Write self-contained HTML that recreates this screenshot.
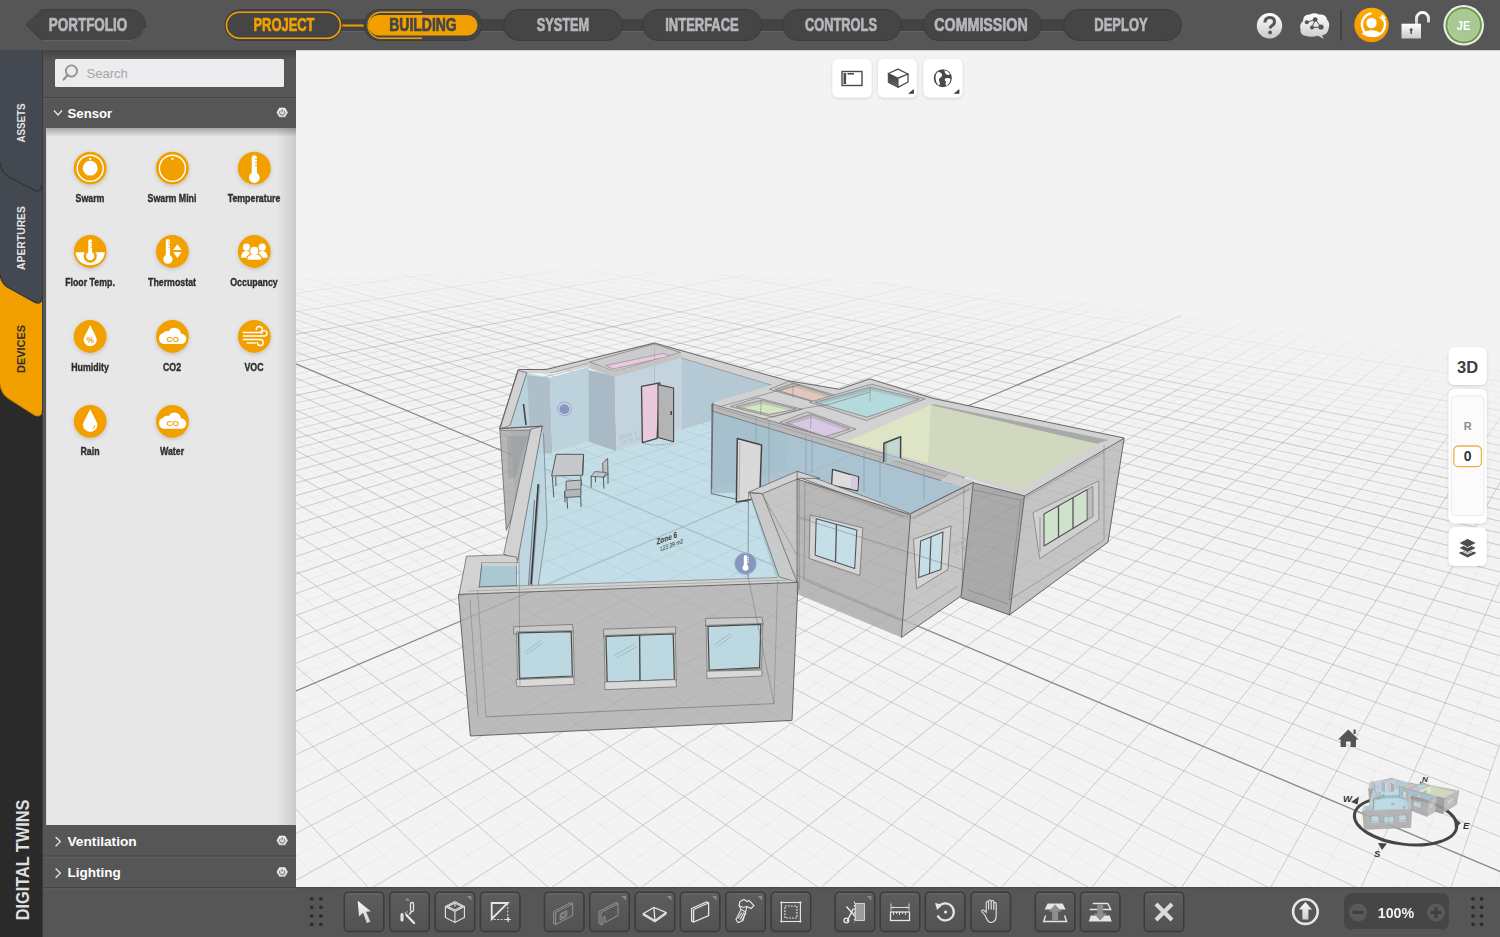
<!DOCTYPE html>
<html><head><meta charset="utf-8"><style>
*{margin:0;padding:0;box-sizing:border-box}
html,body{width:1500px;height:937px;overflow:hidden;background:#f3f3f3;font-family:"Liberation Sans",sans-serif}
#vp{position:absolute;left:0;top:0;width:1500px;height:937px;overflow:hidden}
#top{position:absolute;left:0;top:0;width:1500px;height:50px;background:#555655}
#left{position:absolute;left:0;top:50px;width:296px;height:887px}
#bottom{position:absolute;left:296px;top:887px;width:1204px;height:50px;background:#555655}
.pt{position:absolute;top:10px;height:31px;line-height:31px;-webkit-text-stroke:0.7px currentColor;text-align:center;font-weight:bold;font-size:18px;color:#b8b7bc;transform:scaleX(0.76);white-space:nowrap}
.vt{position:absolute;font-weight:bold;font-size:11.5px;white-space:nowrap;line-height:14px}
.lab{position:absolute;-webkit-text-stroke:0.35px currentColor;width:80px;text-align:center;font-weight:bold;font-size:10px;line-height:12px;color:#2e2e2e;transform:scaleX(0.88);white-space:nowrap}

</style></head><body>
<div id="vp"><svg width="1500" height="937" viewBox="0 0 1500 937" style="position:absolute;left:0;top:0">
<rect x="0" y="0" width="1500" height="937" fill="#f3f3f3"/>
<path d="M1319 352L1341 338M1269 364L1318 334M1207 382L1296 331M1145 397L1274 328M1089 408L1253 325M1016 426L1232 322M949 439L1212 319M877 453L1193 316M800 468L1174 313M715 484L1155 310M623 502L1137 308M523 522L1119 305M444 532L1094 305M327 555L1045 313M274 555L993 322M293 532L946 328M278 522L886 338M296 502L834 345M281 493L778 352M267 484L719 360M284 468L657 369M271 460L590 378M287 446L520 387M274 439L465 392M289 426L387 403M277 420L327 408M-3044 944L-2834 906M-3140 944L-2926 906M-3475 986L-3018 906M-3576 986L-3110 906M606 273L617 271M-3677 986L-3202 906M562 277L596 271M528 279L576 271M430 287L534 271M393 289L513 271M340 294L492 271M300 296L471 271M286 291L416 273M278 289L382 275M287 285L360 275M280 283L325 277M347 426L276 392M428 446L278 378M503 460L281 364M583 476L283 352M670 493L276 338M740 502L278 328M841 522L280 319M920 532L282 310M1038 555L324 316M1128 567L368 322M1223 580L425 331M1371 608L475 338M1481 623L527 345M1541 623L597 356M1494 593L657 364M1501 580L705 369M1506 567L771 378M1512 555L842 387M1517 543L918 397M1522 532L975 403M1527 522L1059 414M1531 512L1123 420M1536 502L1188 426M1540 493L1287 439M1504 476L1359 446M1508 468L1434 453M845 281L832 279M930 287L916 285M982 291L967 289" stroke="#9c9c9c" stroke-opacity="0.05" stroke-width="1" fill="none"/>
<path d="M35383 10663L14215 4010M34199 10663L9123 2494M33016 10663L7395 2001M31832 10663L5899 1550M30648 10663L5192 1352M29465 10663L4654 1201M28281 10663L4103 1031M27098 10663L3789 944M25914 10663L3606 906M24730 10663L3514 906M23547 10663L3422 906M22363 10663L3330 906M21179 10663L3238 906M19996 10663L3146 906M18812 10663L3054 906M17629 10663L2962 906M16445 10663L2870 906M15261 10663L2778 906M14078 10663L2686 906M12894 10663L2594 906M11711 10663L2502 906M10527 10663L2410 906M9343 10663L2318 906M8160 10663L2226 906M6976 10663L2134 906M5792 10663L2042 906M4609 10663L1950 906M3425 10663L1858 906M2242 10663L1766 906M1058 10663L1674 906M-126 10663L1582 906M-1309 10663L1518 811M-2493 10663L1517 608M-3676 10663L1522 484M-4860 10663L1521 414M-6044 10663L1517 369M-7227 10663L1489 364M-8411 10663L1465 356M-9595 10663L1439 352M-10778 10663L1413 349M-11962 10663L1388 345M-13145 10663L1364 341M-14329 10663L1319 352M-15513 10663L1269 364M-16696 10663L1207 382M-17880 10663L202 906M266 872L1145 397M-19063 10663L110 906M298 811L1089 408M-20247 10663L18 906M273 783L1016 426M-21431 10663L-74 906M301 735L949 439M-22614 10663L-166 906M279 713L877 453M-23798 10663L-258 906M258 693L800 468M-24982 10663L-350 906M283 655L715 484M-26165 10663L-442 906M264 639L623 502M-27349 10663L-534 906M287 608L523 522M-28532 10663L-626 906M269 593L444 532M-29716 10663L-718 906M291 567L327 555M-30900 10663L-810 906M-32083 10663L-902 906M-33267 10663L-994 906M-34450 10663L-1086 906M-35634 10663L-1178 906M-36818 10663L-1270 906M-38001 10663L-1362 906M-39185 10663L-1454 906M-40369 10663L-1546 906M-41552 10663L-1638 906M-42736 10663L-1730 906M-43919 10663L-1822 906M-45103 10663L-1914 906M-46287 10663L-2006 906M-47470 10663L-2098 906M-30466 6844L-2190 906M769 283L798 277M-22483 5051L-2282 906M726 287L787 275M-14455 3329L-2374 906M680 291L765 275M-12374 2850L-2466 906M-9397 2219L-2558 906M596 299L733 273M-8473 2001L-2650 906M545 304L712 273M-6918 1675L-2742 906M492 309L691 273M-5815 1444L-3044 944M451 312L680 271M-4991 1271L-3140 944M-4716 1201L-3475 986M332 323L638 271M-4141 1082L-3576 986M287 326L606 273M279 323L562 277M289 317L528 279M273 312L430 287M282 306L393 289M275 304L340 294M284 299L300 296M-46878 10663L-17627 4010M-45695 10663L-10694 2494M-44511 10663L-8366 2001M-43328 10663L-6323 1550M-42144 10663L-5375 1352M-40960 10663L-4653 1201M-39777 10663L-3897 1031M-38593 10663L-3477 944M-37410 10663L-3248 906M-36226 10663L-3156 906M-35042 10663L-3064 906M-33859 10663L-2972 906M-32675 10663L-2880 906M-31491 10663L-2788 906M-30308 10663L-2696 906M-29124 10663L-2604 906M-27941 10663L-2512 906M-26757 10663L-2420 906M-25573 10663L-2328 906M-24390 10663L-2236 906M-23206 10663L-2144 906M-22023 10663L-2052 906M-20839 10663L-1960 906M-19655 10663L-1868 906M-18472 10663L-1776 906M-17288 10663L-1684 906M-16104 10663L-1592 906M-14921 10663L-1500 906M-13737 10663L-1408 906M-12554 10663L-1316 906M-11370 10663L-1224 906M-10186 10663L-1132 906M-9003 10663L-1040 906M-7819 10663L-948 906M-6636 10663L-856 906M-5452 10663L-764 906M-4268 10663L-672 906M-3085 10663L-580 906M-1901 10663L-488 906M-717 10663L-396 906M466 10663L-304 906M1650 10663L-212 906M2833 10663L-120 906M4017 10663L-28 906M5201 10663L64 906M6384 10663L156 906M7568 10663L248 906M8751 10663L283 840M9935 10663L288 758M11119 10663L271 673M12302 10663L276 623M13486 10663L280 580M14670 10663L284 543M15853 10663L287 512M17037 10663L276 476M18220 10663L279 453M19404 10663L282 432M20588 10663L284 414M21771 10663L347 426M22955 10663L428 446M24138 10663L503 460M25322 10663L1628 906M1544 872L583 476M26506 10663L1720 906M1551 840L670 493M27689 10663L1812 906M1486 783L740 502M28873 10663L1904 906M1495 758L841 522M30057 10663L1996 906M1503 735L920 532M31240 10663L2088 906M1510 713L1038 555M32424 10663L2180 906M1517 693L1128 567M33607 10663L2272 906M1524 673L1223 580M34791 10663L2364 906M1530 655L1371 608M35975 10663L2456 906M1536 639L1481 623M23611 6844L2548 906M17806 5051L2640 906M11869 3329L2732 906M10371 2850L2824 906M8160 2219L2916 906M7502 2001L3008 906M6342 1675L3100 906M5520 1444L3192 906M4906 1271L3284 906M4716 1201L3376 906M4286 1082L3468 906M549 279L513 271M3939 986L3560 906M591 283L534 271M635 287L555 271M680 291L576 271M777 301L617 271M815 304L638 271M869 309L659 271M925 314L691 273M1028 323L744 275M1074 326L765 275M1140 333L798 277M1188 336L845 281M1313 347L930 287M1366 350L982 291M1422 354L1036 296" stroke="#9c9c9c" stroke-opacity="0.10" stroke-width="1" fill="none"/>
<path d="M856 294L902 283M812 299L889 281M766 304L867 281M718 309L854 279M614 320L820 277M558 326L769 283M516 330L726 287M455 336L680 291M343 347L596 299M272 354L545 304M284 347L492 309M275 343L451 312M277 333L332 323M375 279L360 275M413 283L382 275M504 294L416 273M548 299L437 273M594 304L450 271M643 309L471 271M746 320L549 279M802 326L591 283M861 333L635 287M906 336L680 291M1019 347L777 301M1089 354L815 304M1141 358L869 309M1218 367L925 314M1333 375L1028 323M1393 380L1074 326M1455 385L1140 333M1519 390L1188 336M1525 380L1313 347M1528 375L1366 350M1503 367L1422 354" stroke="#9c9c9c" stroke-opacity="0.15" stroke-width="1" fill="none"/>
<path d="M956 299L990 289M904 306L967 289M859 312L953 287M811 317L938 285M694 333L856 294M652 336L812 299M594 343L766 304M532 350L718 309M416 362L614 320M344 371L558 326M290 375L516 330M280 371L455 336M282 358L343 347M317 287L288 279M413 301L325 277M457 306L339 275M513 314L375 279M561 320L413 283M667 333L504 294M723 340L548 299M783 347L594 304M830 350L643 309M945 362L746 320M1018 371L802 326M1072 375L861 333M1152 385L906 336M1272 395L1019 347M1364 405L1089 354M1431 411L1141 358M1500 417L1218 367M1508 405L1333 375M1512 400L1393 380M1515 395L1455 385" stroke="#9c9c9c" stroke-opacity="0.20" stroke-width="1" fill="none"/>
<path d="M1036 304L1060 296M986 312L1036 296M941 317L1020 294M834 333L956 299M781 340L904 306M725 347L859 312M666 354L811 317M536 371L694 333M485 375L652 336M412 385L594 343M356 390L532 350M288 390L416 362M277 385L344 371M284 299L277 296M332 306L278 289M375 312L280 283M429 320L317 287M527 333L413 301M580 340L457 306M651 350L513 314M696 354L561 320M825 371L667 333M896 380L723 340M950 385L783 347M1029 395L830 350M1148 405L945 362M1240 417L1018 371M1307 423L1072 375M1376 429L1152 385M1523 442L1272 395M1527 436L1364 405M1530 429L1431 411M1534 423L1500 417" stroke="#9c9c9c" stroke-opacity="0.25" stroke-width="1" fill="none"/>
<path d="M1095 309L1110 304M992 326L1076 299M945 333L1036 304M883 343L986 312M830 350L941 317M712 367L834 333M648 375L781 340M580 385L725 347M527 390L666 354M370 411L536 371M309 417L485 375M272 417L412 385M286 405L356 390M369 326L284 299M427 336L332 306M478 343L375 312M532 350L429 320M649 367L527 333M713 375L580 340M782 385L651 350M855 395L696 354M992 411L825 371M1053 417L896 380M1144 429L950 385M1212 436L1029 395M1356 449L1148 405M1432 457L1240 417M1511 464L1307 423M1515 457L1376 429" stroke="#9c9c9c" stroke-opacity="0.30" stroke-width="1" fill="none"/>
<path d="M1124 317L1146 309M1074 326L1128 306M1019 336L1095 309M907 354L992 326M852 362L945 333M793 371L883 343M731 380L830 350M593 400L712 367M516 411L648 375M458 417L580 385M372 429L527 390M268 436L370 411M283 423L309 417M296 330L279 323M342 336L281 314M454 354L369 326M509 362L427 336M583 375L478 343M647 385L532 350M769 400L649 367M846 411L713 375M928 423L782 385M990 429L855 395M1151 449L992 411M1223 457L1053 417M1298 464L1144 429M1413 480L1212 436M1502 480L1356 449M1506 472L1432 457" stroke="#9c9c9c" stroke-opacity="0.35" stroke-width="1" fill="none"/>
<path d="M1112 333L1164 312M1057 343L1124 317M998 354L1074 326M945 362L1019 336M815 385L907 354M750 395L852 362M681 405L793 371M626 411L731 380M465 436L593 400M401 442L516 411M306 457L458 417M293 449L372 429M304 343L277 333M363 354L296 330M416 362L342 336M546 385L454 354M611 395L509 362M681 405L583 375M756 417L647 385M898 436L769 400M962 442L846 411M1057 457L928 423M1128 464L990 429M1316 489L1151 449M1399 498L1223 457M1486 507L1298 464M1534 507L1413 480" stroke="#9c9c9c" stroke-opacity="0.40" stroke-width="1" fill="none"/>
<path d="M47809 14829L11060 3071M46159 14829L8549 2348M44510 14829L6547 1746M42860 14829L5663 1495M39561 14829L4356 1109M37911 14829L3993 1008M36262 14829L3695 925M34612 14829L3521 889M31313 14829L3341 889M29663 14829L3251 889M28013 14829L3161 889M26364 14829L3071 889M23065 14829L2891 889M21415 14829L2801 889M19765 14829L2711 889M18116 14829L2621 889M14817 14829L2440 889M13167 14829L2350 889M11517 14829L2260 889M9868 14829L2170 889M6569 14829L1990 889M4919 14829L1900 889M3269 14829L1810 889M1620 14829L1720 889M-1679 14829L1540 889M-3329 14829L1521 683M-4979 14829L1520 538M-6628 14829L1519 449M-9927 14829L1503 367M-11577 14829L1479 358M-13227 14829L1452 354M-14876 14829L1426 350M-18175 14829L1376 343M-19825 14829L1352 340M-21475 14829L1329 336M-23124 14829L1307 333M-26424 14829L190 889M253 856L1263 326M-28073 14829L100 889M285 797L1242 323M-29723 14829L10 889M261 771L1222 320M-31372 14829L-80 889M290 724L1202 317M-34672 14829L-260 889M294 664L1112 333M-36321 14829L-350 889M274 647L1057 343M-37971 14829L-441 889M297 615L998 354M-39620 14829L-531 889M278 600L945 362M-42920 14829L-711 889M282 561L815 385M-44569 14829L-801 889M266 549L750 395M-46219 14829L-891 889M286 527L681 405M-47868 14829L-981 889M270 517L626 411M-51168 14829L-1161 889M274 489L465 436M-52817 14829L-1251 889M291 472L401 442M-54467 14829L-1341 889M278 464L306 457M-56116 14829L-1431 889M-59416 14829L-1611 889M-61065 14829L-1701 889M-62715 14829L-1791 889M-64364 14829L-1881 889M-67664 14829L-2061 889M-25864 5810L-2151 889M-19893 4469L-2241 889M-13331 3071L-2331 889M-8910 2104L-2511 889M-7209 1746L-2601 889M-6020 1495L-2691 889M-5624 1396L-2781 889M-4244 1109L-2961 889M-3758 1008L-3051 889M-3360 925L-3141 889M-66014 14829L-25864 5810M-62715 14829L-9943 2348M-61065 14829L-7209 1746M-59416 14829L-6020 1495M-57766 14829L-4849 1235M-54467 14829L-3758 1008M-52817 14829L-3360 925M-51168 14829L-3141 889M-49518 14829L-3051 889M-46219 14829L-2871 889M-44569 14829L-2781 889M-42920 14829L-2691 889M-41270 14829L-2601 889M-37971 14829L-2421 889M-36321 14829L-2331 889M-34672 14829L-2241 889M-33022 14829L-2151 889M-29723 14829L-1971 889M-28073 14829L-1881 889M-26424 14829L-1791 889M-24774 14829L-1701 889M-21475 14829L-1521 889M-19825 14829L-1431 889M-18175 14829L-1341 889M-16526 14829L-1251 889M-13227 14829L-1071 889M-11577 14829L-981 889M-9927 14829L-891 889M-8278 14829L-801 889M-4979 14829L-621 889M-3329 14829L-531 889M-1679 14829L-441 889M-30 14829L-350 889M3269 14829L-170 889M4919 14829L-80 889M6569 14829L10 889M8218 14829L100 889M11517 14829L280 889M13167 14829L285 797M14817 14829L290 724M16466 14829L274 647M19765 14829L282 561M21415 14829L286 527M23065 14829L274 489M24714 14829L278 464M28013 14829L283 423M29663 14829L286 405M31313 14829L277 385M32962 14829L280 371M36262 14829L1630 889M1548 856L284 347M37911 14829L1720 889M1555 825L304 343M39561 14829L1810 889M1491 771L363 354M41210 14829L1900 889M1499 746L416 362M44510 14829L2080 889M1514 703L546 385M46159 14829L2170 889M1521 683L611 395M47809 14829L2260 889M1527 664L681 405M49458 14829L2350 889M1533 647L756 417M20264 5810L2530 889M1544 615L898 436M15923 4469L2621 889M1498 586L962 442M11060 3071L2711 889M1504 573L1057 457M8549 2348L2801 889M1509 561L1128 464M6547 1746L2981 889M1520 538L1316 489M5663 1495L3071 889M1525 527L1399 498M5387 1396L3161 889M1529 517L1486 507M4808 1235L3251 889M3993 1008L3431 889M3695 925L3521 889" stroke="#9c9c9c" stroke-opacity="0.45" stroke-width="1" fill="none"/>
<path d="M49458 14829L20264 5810M41210 14829L4808 1235M32962 14829L3431 889M24714 14829L2981 889M16466 14829L2530 889M8218 14829L2080 889M-30 14829L1630 889M-8278 14829L1519 390M-16526 14829L1401 347M-24774 14829L1285 330M-41270 14829L-621 889M261 586L1093 301M-49518 14829L-1071 889M288 498L1005 291M-57766 14829L-1521 889M281 442L916 285M-66014 14829L-1971 889M275 400L832 279M-9943 2348L-2421 889M270 367L744 275M-4849 1235L-2871 889M286 336L659 271M281 314L555 271M277 296L437 273M273 281L288 279M-64364 14829L-13331 3071M-56116 14829L-4244 1109M-47868 14829L-2961 889M-39620 14829L-2511 889M-31372 14829L-2061 889M-23124 14829L-1611 889M-14876 14829L-1161 889M-6628 14829L-711 889M1620 14829L-260 889M9868 14829L190 889M18116 14829L278 600M26364 14829L281 442M42860 14829L1990 889M1507 724L282 306M51108 14829L2440 889M1539 630L303 277M7813 2104L2891 889M1515 549L395 273M4356 1109L3341 889M1538 498L492 271M1519 449L596 271M1504 411L712 273M1522 385L867 281" stroke="#9c9c9c" stroke-opacity="0.50" stroke-width="1" fill="none"/>
<path d="M-26800 12188L1182 315M29497 12673L123 291" stroke="#8a8a8a" stroke-width="1.3" fill="none"/>
<path d="M-2000 518L-817 518L-761 505L-708 493L-657 482L-609 471L-563 461L-519 452L-476 443L-436 435L-397 428L-360 420L-323 414L-289 407L-255 401L-222 395L-191 390L-160 385L-130 380L-130 380L-101 375L-73 371L-46 367L-19 363L7 360L32 356L57 353L82 350L106 347L129 345L152 342L175 340L197 338L219 336L240 334L262 332L283 331L303 329L324 328L344 327L364 325L384 324L403 324L423 323L442 322L461 322L480 321L499 321L518 321L537 321L556 321L574 321L593 322L611 322L630 322L649 323L667 324L686 325L704 326L723 327L742 328L761 329L780 331L799 333L818 334L837 336L857 338L876 340L896 343L916 345L937 348L957 351L978 354L999 357L1021 361L1042 364L1065 368L1087 372L1110 377L1134 381L1158 386L1182 391L1208 397L1233 402L1260 409L1287 415L1315 422L1344 429L1374 437L1404 446L1436 454L1469 464L1504 474L1540 485L1577 496L1616 509L1657 522L4000 522L4000 -100L-2000 -100Z" fill="#f3f3f3" fill-opacity="0.20"/>
<path d="M-2000 522L-913 522L-851 508L-792 495L-736 483L-683 472L-633 461L-585 451L-539 442L-495 433L-453 425L-413 418L-374 410L-337 404L-301 397L-266 391L-233 385L-200 380L-169 375L-138 370L-138 370L-109 366L-80 362L-52 358L-24 354L2 350L28 347L54 344L79 341L103 338L127 335L151 333L174 331L196 329L219 327L241 325L262 323L284 322L305 320L326 319L346 318L366 317L387 316L406 315L426 314L446 314L465 313L485 313L504 312L523 312L542 312L561 312L580 312L599 313L618 313L637 314L656 314L675 315L694 316L713 317L732 318L751 319L770 320L790 322L809 324L829 325L848 327L868 329L889 331L909 334L929 336L950 339L971 342L993 345L1015 348L1037 351L1059 355L1082 359L1105 363L1129 367L1154 371L1178 376L1204 381L1230 387L1257 393L1284 399L1313 405L1342 412L1372 419L1404 427L1436 435L1469 444L1504 454L1541 464L1579 475L1618 486L1660 499L1703 512L1749 526L4000 526L4000 -100L-2000 -100Z" fill="#f3f3f3" fill-opacity="0.20"/>
<path d="M-2000 513L-948 513L-883 499L-821 486L-763 474L-708 462L-656 452L-606 442L-558 432L-513 424L-469 416L-428 408L-388 401L-349 394L-312 388L-277 382L-242 376L-209 371L-177 366L-146 361L-146 361L-115 357L-86 353L-57 349L-29 345L-2 341L25 338L51 335L76 332L101 329L125 327L149 325L173 322L196 320L219 318L241 316L263 315L285 313L306 312L327 311L348 309L369 308L389 307L409 307L429 306L449 305L469 305L489 305L508 304L528 304L547 304L567 304L586 304L605 305L624 305L643 306L663 306L682 307L701 308L721 309L740 310L760 311L779 312L799 314L819 315L839 317L859 319L879 321L900 323L921 325L942 328L963 330L985 333L1007 336L1029 339L1052 342L1075 346L1098 350L1122 354L1147 358L1172 362L1198 367L1224 372L1251 378L1279 383L1308 389L1337 396L1368 403L1399 410L1432 418L1466 426L1501 435L1537 444L1576 454L1616 465L1657 477L1701 489L1748 502L1796 517L4000 517L4000 -100L-2000 -100Z" fill="#f3f3f3" fill-opacity="0.20"/>
<path d="M-2000 520L-1055 520L-982 504L-914 490L-849 477L-789 464L-732 453L-677 442L-626 433L-576 423L-530 415L-485 407L-442 399L-401 392L-361 385L-323 379L-287 373L-251 367L-217 362L-184 357L-152 353L-152 353L-121 348L-91 344L-62 340L-34 337L-6 333L21 330L48 327L74 324L99 321L124 319L148 317L172 314L195 312L218 310L241 309L263 307L285 306L307 304L329 303L350 302L371 301L391 300L412 299L432 298L453 298L473 297L493 297L512 297L532 297L552 297L571 297L591 297L611 297L630 297L650 298L669 299L689 299L708 300L728 301L748 302L767 303L787 304L807 306L828 307L848 309L869 311L889 313L910 315L932 317L953 320L975 322L997 325L1020 328L1043 331L1066 334L1090 338L1114 341L1138 345L1164 349L1190 354L1216 359L1243 364L1271 369L1300 374L1330 380L1360 387L1392 394L1425 401L1459 409L1494 417L1531 426L1569 435L1609 445L1651 456L1695 467L1741 480L1790 493L1842 508L1897 524L4000 524L4000 -100L-2000 -100Z" fill="#f3f3f3" fill-opacity="0.20"/>
<path d="M-2000 511L-1091 511L-1015 496L-943 481L-876 468L-813 456L-754 444L-698 434L-644 424L-594 415L-545 406L-499 398L-455 391L-413 383L-373 377L-334 371L-296 365L-260 359L-225 354L-192 349L-159 345L-159 345L-127 340L-97 336L-67 332L-38 329L-9 325L18 322L45 319L71 317L97 314L122 311L147 309L171 307L195 305L218 303L241 301L264 300L286 298L308 297L330 296L351 295L373 294L394 293L414 292L435 291L456 291L476 290L496 290L516 290L536 290L556 289L576 290L596 290L616 290L635 290L655 291L675 291L695 292L715 293L735 294L755 295L775 296L795 297L816 299L836 300L857 302L878 304L899 305L920 307L942 310L964 312L986 315L1009 317L1032 320L1055 323L1079 326L1103 330L1128 333L1153 337L1179 341L1206 346L1233 350L1261 355L1290 361L1320 366L1350 372L1382 378L1415 385L1449 392L1484 400L1520 408L1559 417L1599 426L1641 436L1684 447L1731 459L1779 471L1831 485L1885 499L1944 515L4000 515L4000 -100L-2000 -100Z" fill="#f3f3f3" fill-opacity="0.20"/>
<path d="M-2000 520L-1210 520L-1125 503L-1046 487L-972 473L-902 460L-837 447L-776 436L-717 425L-662 416L-610 406L-561 398L-513 390L-468 382L-425 375L-383 369L-343 363L-305 357L-268 352L-233 346L-198 342L-165 337L-165 337L-133 333L-101 329L-71 325L-42 322L-13 318L15 315L42 312L69 309L95 307L121 304L146 302L170 300L194 298L218 296L241 294L264 293L287 291L309 290L331 289L353 288L374 287L396 286L417 285L438 285L458 284L479 284L499 283L520 283L540 283L560 283L580 283L600 283L620 283L640 284L661 284L681 285L701 285L721 286L741 287L761 288L782 289L802 290L823 292L844 293L865 295L886 297L908 299L930 301L952 303L974 305L997 307L1020 310L1043 313L1067 316L1091 319L1116 322L1142 326L1168 330L1194 334L1221 338L1249 343L1278 348L1308 353L1338 358L1370 364L1402 370L1436 377L1471 384L1508 392L1546 400L1586 409L1627 418L1671 428L1717 439L1765 450L1816 463L1870 476L1927 491L1989 507L2054 524L4000 524L4000 -100L-2000 -100Z" fill="#f3f3f3" fill-opacity="0.20"/>
<path d="M-2000 512L-1247 512L-1158 495L-1076 479L-999 465L-927 452L-859 439L-796 428L-736 418L-680 408L-626 399L-575 390L-526 382L-480 375L-436 368L-393 361L-353 355L-314 350L-276 344L-240 339L-205 334L-171 330L-171 330L-138 326L-106 322L-75 318L-45 315L-16 311L12 308L40 305L67 303L94 300L119 298L145 296L170 293L194 292L218 290L242 288L265 287L288 285L310 284L332 283L354 282L376 281L398 280L419 279L440 278L461 278L482 277L503 277L523 277L544 277L564 277L584 277L605 277L625 277L645 278L666 278L686 279L706 279L727 280L747 281L768 282L788 283L809 284L830 285L851 287L873 288L894 290L916 292L938 294L961 296L984 298L1007 301L1030 303L1054 306L1078 309L1103 312L1128 316L1154 319L1181 323L1208 327L1236 331L1265 336L1294 340L1324 346L1356 351L1388 357L1422 363L1457 370L1493 377L1531 384L1570 392L1611 401L1654 410L1699 420L1747 431L1798 442L1851 455L1907 468L1968 483L2032 499L2101 517L4000 517L4000 -100L-2000 -100Z" fill="#f3f3f3" fill-opacity="0.20"/>
<path d="M-2000 524L-1382 524L-1282 505L-1190 487L-1104 472L-1025 457L-951 444L-881 432L-816 420L-754 410L-696 400L-641 391L-589 383L-539 375L-491 368L-446 361L-403 354L-361 348L-321 343L-283 337L-246 332L-211 328L-176 323L-176 323L-143 319L-111 315L-79 312L-49 308L-19 305L10 302L38 299L65 296L92 294L118 292L144 289L169 287L194 285L218 284L242 282L265 281L288 279L311 278L334 277L356 276L378 275L400 274L421 273L442 273L464 272L485 272L505 271L526 271L547 271L568 271L588 271L609 271L629 271L650 272L670 272L691 273L711 273L732 274L753 275L774 276L795 277L816 278L837 279L858 281L880 282L902 284L924 286L947 288L969 290L993 292L1016 294L1040 297L1064 300L1089 303L1114 306L1140 309L1166 312L1193 316L1221 320L1250 324L1279 329L1309 334L1340 339L1372 344L1406 350L1440 356L1476 362L1513 369L1552 377L1593 385L1635 393L1680 403L1727 413L1776 423L1829 435L1884 447L1943 461L2006 476L2074 492L2146 509L4000 509L4000 -100L-2000 -100Z" fill="#f3f3f3" fill-opacity="1.00"/>

<g id="bld"><polygon points="526.8,372.8 549.7,377.7 552.3,453.0 588.7,441.8 616.4,451.3 681.4,429.7 711.0,421.0 711.7,489.0 749.0,492.0 797.0,582.0 477.6,590.0 517.8,585.0 517.8,560.0 530.6,429.2 510.1,425.4" fill="#b0d5e2" fill-opacity="0.72"/>
<polygon points="526.3,375.0 549.7,377.7 552.3,453.0 531.0,455.0" fill="#aebfca"/>
<polygon points="549.7,377.7 589.0,367.0 588.7,441.8 552.3,453.0" fill="#bcd3dd"/>
<polygon points="588.7,369.9 614.7,376.0 616.4,451.3 588.7,441.8" fill="#a9bac6"/>
<polygon points="614.7,376.0 681.4,357.7 681.4,429.7 616.4,451.3" fill="#c3d4de"/>
<polygon points="681.4,352.0 787.0,380.5 787.0,470.0 711.7,489.0 711.0,421.0 681.4,429.7" fill="#b4c9d4"/>
<polygon points="518.5,369.5 546.2,369.5 654.5,343.0 787.5,380.6 774.5,386.0 681.4,357.7 663.0,351.0 589.0,367.0 549.7,373.3 526.3,373.3" fill="#d2d2d2"/>
<polygon points="589.5,362.0 654.5,343.9 680.5,352.5 614.7,371.6" fill="#d2d2d2"/>
<polygon points="589.5,362.0 654.5,343.9 680.5,352.5 614.7,371.6" fill="#cbcbcb" stroke="#6a6a6a" stroke-width="0.6" stroke-linejoin="round"/>
<polygon points="606.0,365.5 663.2,353.4 670.0,356.0 613.0,369.0" fill="#ecc9e2" stroke="#777" stroke-width="0.5" stroke-linejoin="round"/>
<polyline points="549.7,373.3 589.0,363.0" fill="none" stroke="#777" stroke-width="0.5" stroke-linejoin="round"/>
<polyline points="681.4,358.0 774.5,386.0" fill="none" stroke="#777" stroke-width="0.5" stroke-linejoin="round"/>
<polyline points="654.5,343.9 654.5,420.0" fill="none" stroke="#8aa0ad" stroke-width="0.5" stroke-opacity="0.7" stroke-linejoin="round"/>
<polygon points="589.5,363.0 614.7,371.6 681.4,352.5 681.4,358.0 614.7,377.0 589.5,368.5" fill="#c4c4c4"/>
<polygon points="641.5,386.3 659.7,382.9 657.1,438.3 642.4,442.7" fill="#e9c9dd" stroke="#444" stroke-width="1.3" stroke-linejoin="round"/>
<polygon points="658.0,384.6 673.6,388.0 673.6,441.8 658.0,437.5" fill="#b4b4b4" stroke="#444" stroke-width="1.1" stroke-linejoin="round"/>
<polygon points="713.0,402.3 787.5,380.6 839.5,389.3 869.9,378.9 932.8,396.0 960.0,404.9 847.7,440.9 965.0,476.8 850.0,450.0 713.0,408.0" fill="#d2d2d2"/>
<polygon points="769.3,389.3 788.4,381.5 838.7,396.2 821.3,404.0" fill="#c9c9c9" stroke="#6f6f6f" stroke-width="0.6" stroke-linejoin="round"/>
<polygon points="775.3,389.6 793.3,383.4 832.7,395.9 816.3,402.2" fill="#e3c7bf" stroke="#6a6a6a" stroke-width="0.6" stroke-linejoin="round"/>
<polygon points="775.3,389.6 793.3,383.4 793.8,386.9 777.3,392.1" fill="#9a9a9a" fill-opacity="0.45"/>
<polygon points="793.3,383.4 832.7,395.9 830.7,398.4 793.8,386.9" fill="#a0a0a0" fill-opacity="0.4"/>
<polyline points="793.3,383.4 792.8,397.4" fill="none" stroke="#777" stroke-width="0.6" stroke-opacity="0.8" stroke-linejoin="round"/>
<polygon points="730.3,406.6 757.2,397.9 802.3,409.2 772.8,417.0" fill="#c9c9c9" stroke="#6f6f6f" stroke-width="0.6" stroke-linejoin="round"/>
<polygon points="736.3,406.7 761.1,400.4 796.3,409.1 769.1,414.4" fill="#d4e5c5" stroke="#6a6a6a" stroke-width="0.6" stroke-linejoin="round"/>
<polygon points="736.3,406.7 761.1,400.4 761.6,403.9 738.3,409.2" fill="#9a9a9a" fill-opacity="0.45"/>
<polygon points="761.1,400.4 796.3,409.1 794.3,411.6 761.6,403.9" fill="#a0a0a0" fill-opacity="0.4"/>
<polyline points="761.1,400.4 760.6,414.4" fill="none" stroke="#777" stroke-width="0.6" stroke-opacity="0.8" stroke-linejoin="round"/>
<polygon points="809.2,402.3 871.6,384.1 925.3,398.8 866.4,420.5" fill="#c9c9c9" stroke="#6f6f6f" stroke-width="0.6" stroke-linejoin="round"/>
<polygon points="815.2,402.3 870.4,387.3 919.3,399.0 866.9,417.2" fill="#b5dade" stroke="#6a6a6a" stroke-width="0.6" stroke-linejoin="round"/>
<polygon points="815.2,402.3 870.4,387.3 870.9,390.8 817.2,404.8" fill="#9a9a9a" fill-opacity="0.45"/>
<polygon points="870.4,387.3 919.3,399.0 917.3,401.5 870.9,390.8" fill="#a0a0a0" fill-opacity="0.4"/>
<polyline points="870.4,387.3 869.9,401.3" fill="none" stroke="#777" stroke-width="0.6" stroke-opacity="0.8" stroke-linejoin="round"/>
<polygon points="779.7,422.2 807.5,411.8 856.0,429.1 828.3,439.5" fill="#c9c9c9" stroke="#6f6f6f" stroke-width="0.6" stroke-linejoin="round"/>
<polygon points="785.7,422.5 811.1,414.4 850.0,428.8 824.7,436.9" fill="#d8c8e2" stroke="#6a6a6a" stroke-width="0.6" stroke-linejoin="round"/>
<polygon points="785.7,422.5 811.1,414.4 811.6,417.9 787.7,425.0" fill="#9a9a9a" fill-opacity="0.45"/>
<polygon points="811.1,414.4 850.0,428.8 848.0,431.3 811.6,417.9" fill="#a0a0a0" fill-opacity="0.4"/>
<polyline points="811.1,414.4 810.6,428.4" fill="none" stroke="#777" stroke-width="0.6" stroke-opacity="0.8" stroke-linejoin="round"/>
<polyline points="716.0,407.7 780.0,390.0 800.0,385.0" fill="none" stroke="#777" stroke-width="0.6" stroke-linejoin="round"/>
<polyline points="760.0,420.0 806.0,408.0 830.0,404.0 870.0,392.0" fill="none" stroke="#777" stroke-width="0.6" stroke-linejoin="round"/>
<polygon points="712.1,407.7 961.3,478.7 973.4,482.3 910.5,513.7 797.0,471.4 748.5,492.2 711.2,493.6" fill="#a6c0cd" fill-opacity="0.93"/>
<polygon points="712.1,404.0 965.0,476.8 952.0,484.0 712.1,411.0" fill="#b9b9b9" stroke="#5a5a5a" stroke-width="0.6" stroke-linejoin="round"/>
<polyline points="716.0,407.5 958.0,480.0" fill="none" stroke="#8a8a8a" stroke-width="0.5" stroke-linejoin="round"/>
<polyline points="712.1,404.0 711.2,493.6 748.5,502.0" fill="none" stroke="#5a5a5a" stroke-width="0.8" stroke-linejoin="round"/>
<polyline points="756.0,417.0 756.0,500.0" fill="none" stroke="#7f98a6" stroke-width="0.6" stroke-linejoin="round"/>
<polyline points="769.0,421.0 769.0,498.0" fill="none" stroke="#7f98a6" stroke-width="0.6" stroke-linejoin="round"/>
<polyline points="806.0,436.0 806.0,475.0" fill="none" stroke="#7f98a6" stroke-width="0.6" stroke-linejoin="round"/>
<polyline points="812.0,438.0 812.0,473.0" fill="none" stroke="#7f98a6" stroke-width="0.6" stroke-linejoin="round"/>
<polyline points="864.0,453.0 864.0,492.0" fill="none" stroke="#7f98a6" stroke-width="0.6" stroke-linejoin="round"/>
<polyline points="880.0,458.0 880.0,497.0" fill="none" stroke="#7f98a6" stroke-width="0.6" stroke-linejoin="round"/>
<polyline points="924.0,470.0 924.0,500.0" fill="none" stroke="#7f98a6" stroke-width="0.6" stroke-linejoin="round"/>
<polygon points="737.3,438.5 761.6,445.0 759.7,498.0 736.4,502.0" fill="#d9d9d9" stroke="#444" stroke-width="1.5" stroke-linejoin="round"/>
<polyline points="740.0,442.0 739.0,499.0" fill="none" stroke="#999" stroke-width="0.6" stroke-linejoin="round"/>
<polygon points="832.5,469.3 858.7,476.8 857.7,490.8 831.6,485.2" fill="#dcdcdc" stroke="#444" stroke-width="1.3" stroke-linejoin="round"/>
<polygon points="851.0,475.0 858.0,477.0 857.5,490.0 851.0,489.0" fill="#d8c8e2"/>
<polygon points="932.8,398.4 1124.2,438.0 1023.7,496.0 963.7,476.7 847.7,440.9" fill="#d2d2d2"/>
<polygon points="847.7,440.9 930.9,405.1 1097.2,443.8 1019.8,489.2" fill="#d0d9bd"/>
<polygon points="847.7,440.9 930.9,405.1 928.0,463.1" fill="#dfe5c8" fill-opacity="0.9"/>
<polygon points="933.8,404.2 1108.8,440.0 1097.2,443.8 930.9,405.1" fill="#a9a9a9"/>
<polygon points="883.9,443.2 900.7,436.7 900.5,459.5 883.7,464.0" fill="#b3ced6" fill-opacity="0.6"/>
<polyline points="883.7,462.0 883.9,443.2 900.7,436.7 900.5,458.0" fill="none" stroke="#444" stroke-width="1.5" stroke-linejoin="round"/>
<polyline points="886.0,443.0 886.0,462.0" fill="none" stroke="#777" stroke-width="0.6" stroke-linejoin="round"/>
<polygon points="950.0,474.0 973.5,482.0 963.7,487.0 940.0,481.0" fill="#c9c9c9"/>
<polygon points="1024.5,495.9 1124.1,438.3 1108.0,542.3 1009.5,614.9" fill="#b8b8b8" fill-opacity="0.8"/>
<polygon points="973.5,482.9 1024.5,495.9 1009.5,614.9 960.5,597.6" fill="#9a9a9a" fill-opacity="0.82"/>
<polygon points="1033.0,512.6 1098.8,480.9 1098.8,519.8 1039.7,558.7" fill="#d0d0d0" stroke="#777" stroke-width="0.7" stroke-linejoin="round"/>
<polygon points="1044.0,514.0 1087.3,489.6 1087.3,519.8 1044.0,546.0" fill="#cfe3cc" stroke="#555" stroke-width="1.1" stroke-linejoin="round"/>
<polygon points="1087.3,489.6 1093.0,486.5 1093.0,516.5 1087.3,519.8" fill="#bdbdbd" stroke="#666" stroke-width="0.6" stroke-linejoin="round"/>
<polyline points="1058.5,506.0 1058.5,537.5" fill="none" stroke="#555" stroke-width="1.3" stroke-linejoin="round"/>
<polyline points="1073.0,497.8 1073.0,529.0" fill="none" stroke="#555" stroke-width="1.3" stroke-linejoin="round"/>
<polyline points="1040.0,517.0 1040.0,552.0" fill="none" stroke="#777" stroke-width="0.6" stroke-linejoin="round"/>
<polygon points="797.1,471.4 910.5,513.7 973.4,482.3 971.0,489.0 911.0,518.5 799.2,477.5" fill="#d4d4d4" stroke="#5a5a5a" stroke-width="0.7" stroke-linejoin="round"/>
<polyline points="799.2,477.5 911.0,518.5 971.0,489.0" fill="none" stroke="#777" stroke-width="0.6" stroke-linejoin="round"/>
<polygon points="797.0,479.0 910.5,514.8 901.4,637.5 797.0,594.0" fill="#a9a9a9" fill-opacity="0.8"/>
<polygon points="910.5,513.7 973.4,482.3 961.2,595.9 901.4,637.5" fill="#bababa" fill-opacity="0.8"/>
<polygon points="810.1,514.8 862.8,527.9 859.8,575.6 809.1,558.4" fill="#d4d4d4" stroke="#666" stroke-width="0.7" stroke-linejoin="round"/>
<polygon points="816.2,518.8 856.8,530.0 854.7,568.5 815.2,555.3" fill="#c4dfe8" stroke="#555" stroke-width="1.1" stroke-linejoin="round"/>
<polyline points="836.5,524.0 835.5,562.0" fill="none" stroke="#555" stroke-width="1.3" stroke-linejoin="round"/>
<polygon points="913.5,539.1 951.0,525.9 948.0,569.5 916.6,588.8" fill="#d4d4d4" stroke="#666" stroke-width="0.7" stroke-linejoin="round"/>
<polygon points="920.6,541.1 943.0,532.0 941.0,569.5 918.6,577.6" fill="#c4dfe8" stroke="#555" stroke-width="1.1" stroke-linejoin="round"/>
<polyline points="931.0,537.0 929.5,574.0" fill="none" stroke="#555" stroke-width="1.2" stroke-linejoin="round"/>
<polygon points="526.8,372.8 531.0,455.0 515.0,500.0 510.1,425.4" fill="#b9d2dc"/>
<polyline points="523.5,404.0 526.0,425.0" fill="none" stroke="#444" stroke-width="1.6" stroke-linejoin="round"/>
<polygon points="517.8,370.3 526.8,372.8 510.1,425.4 499.9,429.2" fill="#d2d2d2" stroke="#5a5a5a" stroke-width="0.7" stroke-linejoin="round"/>
<polygon points="499.9,429.2 542.2,426.2 531.0,470.0 506.3,530.5" fill="#a8a8a8" fill-opacity="0.8" stroke="#5a5a5a" stroke-width="0.7" stroke-linejoin="round"/>
<polygon points="507.0,436.0 528.0,436.0 515.0,478.0 508.0,478.0" fill="#8f8f8f" fill-opacity="0.35"/>
<polygon points="499.9,428.0 542.2,426.2 542.2,428.5 530.6,430.0 501.0,430.5" fill="#d2d2d2" stroke="#5a5a5a" stroke-width="0.6" stroke-linejoin="round"/>
<polygon points="542.2,428.0 547.0,525.0 538.3,585.0 517.8,585.0 517.8,560.0" fill="#bcd5df" fill-opacity="0.9"/>
<polyline points="543.5,433.0 547.0,525.0 538.3,585.0" fill="none" stroke="#777" stroke-width="0.7" stroke-linejoin="round"/>
<polygon points="530.6,429.2 542.2,426.2 517.8,560.0 503.7,554.0" fill="#d2d2d2" stroke="#5a5a5a" stroke-width="0.7" stroke-linejoin="round"/>
<polygon points="537.5,484.0 540.0,485.0 532.5,585.0 529.5,585.0" fill="#7d8c93" fill-opacity="0.8"/>
<polyline points="538.2,484.0 531.1,584.3" fill="none" stroke="#333" stroke-width="1.3" stroke-linejoin="round"/>
<polyline points="534.5,500.0 528.5,585.0" fill="none" stroke="#555" stroke-width="0.7" stroke-linejoin="round"/>
<polygon points="466.5,556.2 502.4,554.9 516.5,557.0 517.8,562.6 482.0,562.6 479.4,586.9 516.5,585.6 477.6,590.0 458.8,596.0" fill="#d2d2d2" stroke="#5a5a5a" stroke-width="0.7" stroke-linejoin="round"/>
<polygon points="482.0,562.6 516.5,562.6 516.5,585.6 479.4,586.9" fill="#a9c8d4" stroke="#5a5a5a" stroke-width="0.6" stroke-linejoin="round"/>
<polygon points="482.0,562.6 516.5,562.6 516.5,566.0 482.0,566.0" fill="#d0d0d0"/>
<polygon points="748.5,492.2 797.1,471.4 797.1,582.3" fill="#bdbdbd" fill-opacity="0.85"/>
<polygon points="748.5,492.2 750.0,493.0 779.0,576.8 775.6,576.8" fill="#9fbcc5" fill-opacity="0.6"/>
<polygon points="749.7,493.0 762.4,493.6 797.1,582.3 779.0,576.8" fill="#c9c9c9" fill-opacity="0.9" stroke="#5a5a5a" stroke-width="0.7" stroke-linejoin="round"/>
<polyline points="748.5,492.2 748.0,576.8" fill="none" stroke="#667" stroke-width="0.6" stroke-linejoin="round"/>
<polygon points="748.5,492.2 797.1,471.4 820.0,478.3 799.2,478.3 762.4,493.6" fill="#d2d2d2" stroke="#5a5a5a" stroke-width="0.7" stroke-linejoin="round"/>
<polyline points="797.1,471.4 797.1,594.0" fill="none" stroke="#5a5a5a" stroke-width="0.8" stroke-linejoin="round"/>
<polyline points="799.2,478.3 799.2,590.0" fill="none" stroke="#777" stroke-width="0.6" stroke-linejoin="round"/>
<circle cx="745.5" cy="563.6" r="10.8" fill="#8796be" stroke="#a9b3d3" stroke-width="0.8"/><rect x="743.8" y="555" width="3.4" height="11" rx="1.7" fill="#fff"/><circle cx="745.5" cy="567.8" r="3" fill="#fff"/><path d="M747.2 557.5 H749 M747.2 559.8 H749 M747.2 562.1 H749" stroke="#fff" stroke-width="0.9"/>
<circle cx="564.4" cy="408.9" r="7" fill="#c9d0e4" stroke="#8e9dc2" stroke-width="0.8"/><circle cx="564.4" cy="409.2" r="5" fill="#8796be"/>
<polygon points="458.4,594.4 798.0,582.4 792.0,720.4 470.4,736.0" fill="#adadad" fill-opacity="0.8"/>
<polygon points="458.4,594.4 798.0,582.4 777.6,577.6 477.6,587.2" fill="#d2d2d2"/>
<polyline points="468.0,591.0 788.0,580.0" fill="none" stroke="#8a8a8a" stroke-width="0.5" stroke-linejoin="round"/>
<polyline points="477.6,587.2 777.6,577.6" fill="none" stroke="#6f6f6f" stroke-width="0.6" stroke-linejoin="round"/>
<polyline points="486.0,716.8 774.0,703.6" fill="none" stroke="#777" stroke-width="0.7" stroke-linejoin="round"/>
<polyline points="477.6,590.0 486.0,716.8" fill="none" stroke="#888" stroke-width="0.6" stroke-linejoin="round"/>
<polyline points="777.6,580.0 774.0,703.6" fill="none" stroke="#888" stroke-width="0.6" stroke-linejoin="round"/>
<polygon points="513.6,626.8 572.4,624.4 573.6,632.8 513.6,634.0" fill="#c9c9c9" stroke="#6a6a6a" stroke-width="0.7" stroke-linejoin="round"/>
<polyline points="513.6,634.0 573.6,632.8" fill="none" stroke="#888" stroke-width="0.5" stroke-linejoin="round"/>
<polygon points="516.4,631.8 573.2,630.6 574.4,677.0 517.6,679.4" fill="#cfcfcf" fill-opacity="0.7" stroke="#666" stroke-width="0.6" stroke-linejoin="round"/>
<polygon points="518.4,632.8 571.2,631.6 572.4,676.0 519.6,678.4" fill="#bcd8e1" stroke="#4a4a4a" stroke-width="1.2" stroke-linejoin="round"/>
<polyline points="524.7,652.0 540.6,640.6" fill="none" stroke="#7c98a4" stroke-width="0.6" stroke-opacity="0.8" stroke-linejoin="round"/>
<polyline points="526.8,654.2 542.7,642.8" fill="none" stroke="#7c98a4" stroke-width="0.6" stroke-opacity="0.8" stroke-linejoin="round"/>
<polygon points="516.0,679.6 573.6,677.2 574.3,684.4 517.2,686.8" fill="#d9d9d9" stroke="#6a6a6a" stroke-width="0.7" stroke-linejoin="round"/>
<polygon points="603.6,629.2 675.6,626.8 675.6,634.0 603.6,636.9" fill="#c9c9c9" stroke="#6a6a6a" stroke-width="0.7" stroke-linejoin="round"/>
<polyline points="603.6,636.9 675.6,634.0" fill="none" stroke="#888" stroke-width="0.5" stroke-linejoin="round"/>
<polygon points="604.0,635.4 675.2,633.0 676.4,680.6 605.2,683.0" fill="#cfcfcf" fill-opacity="0.7" stroke="#666" stroke-width="0.6" stroke-linejoin="round"/>
<polygon points="606.0,636.4 673.2,634.0 674.4,679.6 607.2,682.0" fill="#bcd8e1" stroke="#4a4a4a" stroke-width="1.2" stroke-linejoin="round"/>
<polyline points="614.1,655.6 634.2,644.2" fill="none" stroke="#7c98a4" stroke-width="0.6" stroke-opacity="0.8" stroke-linejoin="round"/>
<polyline points="616.8,657.8 636.9,646.4" fill="none" stroke="#7c98a4" stroke-width="0.6" stroke-opacity="0.8" stroke-linejoin="round"/>
<polygon points="604.8,682.0 675.6,679.6 676.8,686.8 604.8,689.7" fill="#d9d9d9" stroke="#6a6a6a" stroke-width="0.7" stroke-linejoin="round"/>
<polyline points="639.6,635.0 640.0,681.0" fill="none" stroke="#4a4a4a" stroke-width="1.4" stroke-linejoin="round"/>
<polygon points="705.6,618.4 762.0,617.2 763.2,624.4 705.6,626.3" fill="#c9c9c9" stroke="#6a6a6a" stroke-width="0.7" stroke-linejoin="round"/>
<polyline points="705.6,626.3 763.2,624.4" fill="none" stroke="#888" stroke-width="0.5" stroke-linejoin="round"/>
<polygon points="706.0,625.3 762.8,623.4 761.6,668.6 707.2,671.0" fill="#cfcfcf" fill-opacity="0.7" stroke="#666" stroke-width="0.6" stroke-linejoin="round"/>
<polygon points="708.0,626.3 760.8,624.4 759.6,667.6 709.2,670.0" fill="#bcd8e1" stroke="#4a4a4a" stroke-width="1.2" stroke-linejoin="round"/>
<polyline points="714.3,644.7 730.2,633.7" fill="none" stroke="#7c98a4" stroke-width="0.6" stroke-opacity="0.8" stroke-linejoin="round"/>
<polyline points="716.4,646.8 732.3,635.9" fill="none" stroke="#7c98a4" stroke-width="0.6" stroke-opacity="0.8" stroke-linejoin="round"/>
<polygon points="706.8,671.2 762.0,670.0 762.0,676.0 706.8,678.4" fill="#d9d9d9" stroke="#6a6a6a" stroke-width="0.7" stroke-linejoin="round"/>
<polyline points="805.0,482.0 804.0,580.0 902.0,621.0" fill="none" stroke="#6f6f6f" stroke-width="0.6" stroke-opacity="0.75" stroke-linejoin="round"/>
<polyline points="805.0,482.0 904.0,517.0" fill="none" stroke="#6f6f6f" stroke-width="0.6" stroke-opacity="0.75" stroke-linejoin="round"/>
<polyline points="797.0,517.0 964.0,570.0" fill="none" stroke="#6f6f6f" stroke-width="0.6" stroke-opacity="0.75" stroke-linejoin="round"/>
<polyline points="913.0,519.0 969.0,489.0" fill="none" stroke="#6f6f6f" stroke-width="0.6" stroke-opacity="0.75" stroke-linejoin="round"/>
<polyline points="904.0,621.0 958.0,586.0" fill="none" stroke="#6f6f6f" stroke-width="0.6" stroke-opacity="0.75" stroke-linejoin="round"/>
<polyline points="964.0,487.0 962.0,589.0" fill="none" stroke="#6f6f6f" stroke-width="0.6" stroke-opacity="0.75" stroke-linejoin="round"/>
<polyline points="1021.0,500.0 1009.0,600.0 1104.0,540.0" fill="none" stroke="#6f6f6f" stroke-width="0.6" stroke-opacity="0.75" stroke-linejoin="round"/>
<polyline points="1104.0,445.0 1104.0,540.0" fill="none" stroke="#6f6f6f" stroke-width="0.6" stroke-opacity="0.75" stroke-linejoin="round"/>
<polyline points="1021.0,500.0 1104.0,452.0" fill="none" stroke="#6f6f6f" stroke-width="0.6" stroke-opacity="0.75" stroke-linejoin="round"/>
<polyline points="973.5,490.0 1020.0,500.0" fill="none" stroke="#6f6f6f" stroke-width="0.6" stroke-opacity="0.75" stroke-linejoin="round"/>
<polyline points="968.0,590.0 1008.0,604.0" fill="none" stroke="#6f6f6f" stroke-width="0.6" stroke-opacity="0.75" stroke-linejoin="round"/>
<polyline points="762.0,494.0 797.0,555.0" fill="none" stroke="#6f6f6f" stroke-width="0.6" stroke-opacity="0.75" stroke-linejoin="round"/>
<polyline points="470.0,600.0 478.0,716.0" fill="none" stroke="#6f6f6f" stroke-width="0.6" stroke-opacity="0.75" stroke-linejoin="round"/>
<polyline points="519.0,553.0 520.0,686.0" fill="none" stroke="#6f6f6f" stroke-width="0.6" stroke-opacity="0.75" stroke-linejoin="round"/>
<polyline points="747.6,574.0 774.0,703.6" fill="none" stroke="#6f6f6f" stroke-width="0.6" stroke-opacity="0.75" stroke-linejoin="round"/>
<polyline points="458.4,594.4 798.0,582.4 792.0,720.4 470.4,736.0 458.4,594.4" fill="none" stroke="#5a5a5a" stroke-width="0.9" stroke-linejoin="round"/>
<polyline points="797.0,479.0 910.5,514.8 901.4,637.5" fill="none" stroke="#5a5a5a" stroke-width="0.9" stroke-linejoin="round"/>
<polyline points="910.5,513.7 973.4,482.3 961.2,595.9 901.4,637.5" fill="none" stroke="#5a5a5a" stroke-width="0.9" stroke-linejoin="round"/>
<polyline points="973.5,482.9 1024.5,495.9 1009.5,614.9 960.5,597.6" fill="none" stroke="#5a5a5a" stroke-width="0.9" stroke-linejoin="round"/>
<polyline points="1024.5,495.9 1124.1,438.3 1108.0,542.3 1009.5,614.9" fill="none" stroke="#5a5a5a" stroke-width="0.9" stroke-linejoin="round"/>
<polyline points="932.8,398.4 1124.2,438.0" fill="none" stroke="#5a5a5a" stroke-width="0.9" stroke-linejoin="round"/>
<polyline points="518.5,369.5 546.2,369.5 654.5,343.0 787.5,380.6 839.5,389.3 869.9,378.9 932.8,398.4" fill="none" stroke="#5a5a5a" stroke-width="0.9" stroke-linejoin="round"/>
<polyline points="518.5,369.5 499.4,428.8 542.2,426.2" fill="none" stroke="#5a5a5a" stroke-width="0.9" stroke-linejoin="round"/>
<polyline points="713.0,402.3 711.7,489.0" fill="none" stroke="#5a5a5a" stroke-width="0.8" stroke-linejoin="round"/>
<path d="M643 443.5 Q658 447 674 442.5" fill="none" stroke="#777" stroke-width="0.7" stroke-dasharray="1.2 1"/>
<rect x="670.5" y="411" width="1.3" height="4" fill="#333"/>
<polygon points="556.1,454.3 583.7,454.3 582.6,475.2 551.6,476.0" fill="#c6c9cb" stroke="#4a4a4a" stroke-width="0.9"/>
<line x1="552.3" y1="476.4" x2="553.8" y2="497.3" stroke="#4a4a4a" stroke-width="0.9"/>
<line x1="555.7" y1="477" x2="556" y2="486.1" stroke="#4a4a4a" stroke-width="0.9"/>
<line x1="580.7" y1="476.4" x2="581.4" y2="485.3" stroke="#4a4a4a" stroke-width="0.9"/>
<line x1="583.5" y1="455" x2="582.6" y2="475" stroke="#4a4a4a" stroke-width="0.9"/>
<polygon points="566.1,481.2 581.1,480.1 580.7,496.5 566.1,497.3" fill="#bfc2c4" stroke="#4a4a4a" stroke-width="0.8"/>
<polygon points="564.6,491.3 566.1,490.0 580.7,489.0 580.7,496.5 566.1,497.3 564.6,497.0" fill="#b3b6b8" stroke="#4a4a4a" stroke-width="0.6"/>
<line x1="566.9" y1="497.3" x2="567.6" y2="508.5" stroke="#4a4a4a" stroke-width="0.9"/>
<line x1="580.7" y1="496.5" x2="581.1" y2="507" stroke="#4a4a4a" stroke-width="0.9"/>
<line x1="564.8" y1="491.3" x2="565" y2="502.5" stroke="#4a4a4a" stroke-width="0.9"/>
<polygon points="602.7,462.9 607.6,458.4 608.0,474.0 603.2,478.0" fill="#bdbfc1" stroke="#4a4a4a" stroke-width="0.8"/>
<polygon points="590.8,476.4 595.3,471.5 606.5,472.6 603.5,477.1" fill="#c3c6c8" stroke="#4a4a4a" stroke-width="0.7"/>
<line x1="591.2" y1="476.4" x2="591.2" y2="487.6" stroke="#4a4a4a" stroke-width="0.9"/>
<line x1="603.5" y1="477.1" x2="603.9" y2="488.7" stroke="#4a4a4a" stroke-width="0.9"/>
<line x1="595.3" y1="476" x2="595.6" y2="482.3" stroke="#4a4a4a" stroke-width="0.9"/>
<line x1="608" y1="473" x2="608" y2="483.8" stroke="#4a4a4a" stroke-width="0.9"/>
<g transform="translate(667,541) rotate(-20) skewX(-15) scale(0.85,1)" font-family="Liberation Sans" font-weight="bold" fill="#333"><text x="0" y="0" font-size="8" text-anchor="middle">Zone 6</text><text x="5" y="7.5" font-size="6.2" text-anchor="middle" font-weight="normal">123.39 m2</text></g>
<g transform="translate(628,437) rotate(-16) skewX(-10)" font-family="Liberation Sans" fill="#8a99a4" opacity="0.45"><text x="0" y="0" font-size="6" text-anchor="middle">Zone 1</text><text x="3" y="5.5" font-size="5" text-anchor="middle">12.33 m2</text></g>
<g transform="translate(812,519) rotate(-10)" font-family="Liberation Sans" fill="#999" opacity="0.7"><text x="0" y="0" font-size="6" text-anchor="middle">Zone 7</text></g>
<g transform="translate(960,545) rotate(-22)" font-family="Liberation Sans" fill="#999" opacity="0.7"><text x="0" y="0" font-size="6" text-anchor="middle">Zone 8</text><text x="3" y="6" font-size="5" text-anchor="middle">21.30 m2</text></g></g>
<g transform="rotate(7 1405.6 820.8)"><ellipse cx="1405.6" cy="820.8" rx="51.5" ry="23.5" fill="none" stroke="#454545" stroke-width="3"/></g>
<path d="M1351 802 L1359 796.5 L1357.5 804.5 Z" fill="#454545"/>
<path d="M1461 823 L1454 818 L1455 828 Z" fill="#454545"/>
<path d="M1378 843 L1387 843.5 L1382 850 Z" fill="#454545"/>
<path d="M1420 781.5 L1427 784.5 L1420 787 Z" fill="#454545"/>
<g font-family="Liberation Sans" font-weight="bold" font-style="italic" fill="#333" font-size="9.5">
<text x="1343" y="802">W</text><text x="1463" y="829">E</text><text x="1374" y="857">S</text><text x="1422" y="782" font-size="8">N</text></g>

<use href="#bld" transform="translate(1296.0,733.5) scale(0.145,0.1305)"/>
<use href="#bld" transform="translate(1296.0,733.5) scale(0.145,0.1305)" opacity="0.55"/>
</svg></div>
<div id="rightctl">
 <svg style="position:absolute;left:0;top:0" width="1500" height="937">
  <defs>
   <filter id="bsh" x="-30%" y="-30%" width="160%" height="160%"><feDropShadow dx="0" dy="1" stdDeviation="1.8" flood-color="#000" flood-opacity="0.14"/></filter>
  </defs>
  <g fill="#ffffff" filter="url(#bsh)">
   <rect x="832.5" y="59" width="39" height="38.5" rx="6"/>
   <rect x="878" y="59" width="39" height="38.5" rx="6"/>
   <rect x="923.5" y="59" width="39" height="38.5" rx="6"/>
   <rect x="1448.6" y="347.2" width="38.1" height="37.8" rx="6"/>
   <rect x="1448.6" y="389" width="38.1" height="134.6" rx="6"/>
   <rect x="1448.6" y="527.2" width="38.1" height="38.8" rx="6"/>
  </g>
  <!-- view icon 1 -->
  <rect x="842" y="71.5" width="20" height="14" fill="none" stroke="#4a4a4a" stroke-width="1.4"/>
  <rect x="843.5" y="73" width="2.6" height="11" fill="#4a4a4a"/>
  <rect x="847.5" y="73" width="6.5" height="1.6" fill="#4a4a4a"/>
  <!-- cube icon -->
  <defs><linearGradient id="cubeg" x1="0" y1="0" x2="0" y2="1"><stop offset="0" stop-color="#3a3a3a"/><stop offset="1" stop-color="#6a6a6a"/></linearGradient></defs>
  <path d="M888.3 73.5 L897.9 78.3 V87.3 L888.3 82.5 Z" fill="url(#cubeg)" stroke="#4a4a4a" stroke-width="1" stroke-linejoin="round"/>
  <path d="M888.3 73.5 L897.9 69.2 L908 74 L897.9 78.3 Z" fill="#fff" stroke="#4a4a4a" stroke-width="1.3" stroke-linejoin="round"/>
  <path d="M897.9 78.3 L908 74 V82 L897.9 87.3 Z" fill="#fff" stroke="#4a4a4a" stroke-width="1.3" stroke-linejoin="round"/>
  <path d="M908 93.7 L913.9 88.9 V93.7 Z" fill="#3f3f3f"/>
  <!-- globe -->
  <circle cx="942.8" cy="78.2" r="9" fill="#4a4a4a"/>
  <path d="M937 72.5 Q940 71 941.5 73.5 Q943 76 940.5 77.5 Q938 79 939.5 82 Q940.5 85 938.5 85.5 Q935.5 82 935.5 78 Q935.5 74.5 937 72.5 Z M944.5 70.2 Q948 71 950 74 Q948.5 75.5 946.5 74.5 Q944.5 73.5 944.5 70.2 Z M945 78.5 Q948.5 77.5 950.5 79 Q950 84 946 86 Q945 83 946 81.5 Q944 80.5 945 78.5 Z" fill="#ffffff"/>
  <path d="M953.5 93.7 L959.4 88.9 V93.7 Z" fill="#3f3f3f"/>
  <!-- slider -->
  <line x1="296" y1="50.5" x2="1500" y2="50.5" stroke="#d0d0d0" stroke-width="1"/>
  <rect x="1451.4" y="395.8" width="32.6" height="119.7" rx="4" fill="#fbfbfb" stroke="#ececec" stroke-width="1"/>
  <rect x="1453.8" y="446" width="27.6" height="20.7" rx="4.5" fill="#ffffff" stroke="#eeb04a" stroke-width="1.3"/>
  <!-- layers icon -->
  <path d="M1467.6 548.5 L1476.5 553 L1467.6 557.5 L1458.7 553 Z" fill="#4d4d4d"/>
  <path d="M1458.7 549 L1467.6 553.5 L1476.5 549 L1476.5 550 L1467.6 554.5 L1458.7 550 Z" fill="#fff"/>
  <path d="M1467.6 543.5 L1476.5 548 L1467.6 552.5 L1458.7 548 Z" fill="#4d4d4d" stroke="#fff" stroke-width="0.9"/>
  <path d="M1467.6 538.5 L1476.5 543 L1467.6 547.5 L1458.7 543 Z" fill="#4d4d4d" stroke="#fff" stroke-width="0.9"/>
  <!-- home -->
  <path d="M1338 739.5 L1348.3 729.5 L1358.6 739.5 H1356 V747 H1350.6 V741.5 H1346 V747 H1340.6 V739.5 Z" fill="#555"/>
  <rect x="1353.5" y="729.5" width="2.2" height="4.5" fill="#555"/>
 </svg>
 <div style="position:absolute;left:1448.6px;top:356.5px;width:38.1px;text-align:center;font-weight:bold;font-size:16.5px;line-height:20px;color:#3d3d45">3D</div>
 <div style="position:absolute;left:1448.6px;top:419px;width:38.1px;text-align:center;font-weight:bold;font-size:11px;line-height:14px;color:#8e8e8e">R</div>
 <div style="position:absolute;left:1448.6px;top:448px;width:38.1px;text-align:center;font-weight:bold;font-size:14px;line-height:17px;color:#333">0</div>
</div>

<div id="top">
 <!-- portfolio -->
 <svg style="position:absolute;left:0;top:0" width="1500" height="50">
  <defs>
   <linearGradient id="qg" x1="0" y1="0" x2="0" y2="1"><stop offset="0" stop-color="#ffffff"/><stop offset="1" stop-color="#c9c9c9"/></linearGradient>
   <linearGradient id="og" x1="0" y1="0" x2="0" y2="1"><stop offset="0" stop-color="#ffab00"/><stop offset="1" stop-color="#f29600"/></linearGradient>
  </defs>
  <path d="M26 24.8 L42 9.5 H130 A15.5 15.5 0 0 1 130 40.5 H42 Z" fill="#454545" stroke="#3d3d3d" stroke-width="1"/>
  <path d="M42 40.5 H130 A15.5 15.5 0 0 0 145 28" fill="none" stroke="#636363" stroke-width="1"/>
  <!-- connector band -->
  <rect x="330" y="19" width="760" height="12.5" fill="#434343"/>
  <line x1="330" y1="31.5" x2="1090" y2="31.5" stroke="#636363" stroke-width="1"/>
  <line x1="340" y1="25.5" x2="370" y2="25.5" stroke="#f2a000" stroke-width="2"/>
  <!-- pills -->
  <g fill="#454545" stroke="#3b3b3b" stroke-width="1">
   <rect x="225" y="9.5" width="117" height="31" rx="15.5"/>
   <rect x="364" y="9.5" width="118" height="31" rx="15.5"/>
   <rect x="503.5" y="9.5" width="119" height="31" rx="15.5"/>
   <rect x="642.7" y="9.5" width="119" height="31" rx="15.5"/>
   <rect x="782.7" y="9.5" width="118.5" height="31" rx="15.5"/>
   <rect x="923.5" y="9.5" width="118" height="31" rx="15.5"/>
   <rect x="1063.4" y="9.5" width="118" height="31" rx="15.5"/>
  </g>
  <rect x="226.5" y="12.2" width="114" height="26" rx="13" fill="none" stroke="#f2a000" stroke-width="1.6"/>
  <path d="M422 12.2 H381 A13 13 0 0 0 381 38.2 H422" fill="none" stroke="#f2a000" stroke-width="1.4"/>
  <rect x="368.5" y="15" width="109" height="20.5" rx="10.25" fill="#f2a000"/>
 </svg>
 <div class="pt" style="left:28.2px;width:120px;transform:scaleX(0.747);color:#b8b7bc">PORTFOLIO</div>
 <div class="pt" style="left:223.5px;width:120px;transform:scaleX(0.718);color:#f2a000">PROJECT</div>
 <div class="pt" style="left:362.7px;width:120px;transform:scaleX(0.775);color:#444548">BUILDING</div>
 <div class="pt" style="left:502.6px;width:120px;transform:scaleX(0.707)">SYSTEM</div>
 <div class="pt" style="left:642.0px;width:120px;transform:scaleX(0.720)">INTERFACE</div>
 <div class="pt" style="left:781.3px;width:120px;transform:scaleX(0.713)">CONTROLS</div>
 <div class="pt" style="left:921.1px;width:120px;transform:scaleX(0.792)">COMMISSION</div>
 <div class="pt" style="left:1061.0px;width:120px;transform:scaleX(0.720)">DEPLOY</div>
 <!-- right icons -->
 <svg style="position:absolute;left:1240px;top:0" width="260" height="50" viewBox="1240 0 260 50">
  <circle cx="1269.5" cy="25.8" r="12.7" fill="url(#qg)"/>
  <path d="M1265 22.5 Q1265 17.5 1269.8 17.5 Q1274.5 17.5 1274.5 21.8 Q1274.5 24.5 1271.5 26 Q1270.3 26.7 1270.3 28.5" fill="none" stroke="#555" stroke-width="3" stroke-linecap="butt"/>
  <circle cx="1270.1" cy="32.5" r="1.9" fill="#555"/>
  <path d="M1306 36 Q1300 35 1300.5 29.5 Q1299 24 1303 21 Q1303 14 1310 14.5 Q1314 12 1319 14.5 Q1326 14 1327 19.5 Q1330.5 23 1328.5 29 Q1328 34 1322 35.5 L1324 39 L1318 35.8 Q1312 37.5 1306 36 Z" fill="url(#qg)"/>
  <g fill="#555"><circle cx="1306.8" cy="22.2" r="2"/><circle cx="1315.2" cy="19.6" r="2.4"/><circle cx="1312" cy="27.5" r="2"/><circle cx="1321" cy="27" r="2.6"/></g>
  <path d="M1306.8 22.2 L1315.2 19.6 L1312 27.5 L1321 27 L1315.2 19.6" stroke="#555" stroke-width="1" fill="none"/>
  <line x1="1341" y1="9.5" x2="1341" y2="40.5" stroke="#3a3a3a" stroke-width="1.2"/>
  <circle cx="1371.5" cy="25" r="17.2" fill="url(#og)"/>
  <path d="M1383.5 19 A11.5 11.5 0 1 1 1371.5 13.2" fill="none" stroke="#fff" stroke-width="2.4"/>
  <circle cx="1371.5" cy="23" r="5.2" fill="#fff"/>
  <path d="M1361.5 33.5 Q1371.5 26.5 1381.5 33.5 Q1377 37 1371.5 37 Q1366 37 1361.5 33.5 Z" fill="#fff"/>
  <path d="M1379.5 17.5 H1385.5 M1382.5 14.5 V20.5" stroke="#fff" stroke-width="1.8"/>
  <path d="M1416.5 24 V18.5 A6 6 0 0 1 1428.5 18.5 V22.5" fill="none" stroke="url(#qg)" stroke-width="3"/>
  <rect x="1401.5" y="23.7" width="19.5" height="14.8" fill="url(#qg)"/>
  <circle cx="1411.2" cy="29.8" r="1.5" fill="#555"/><rect x="1410.4" y="30" width="1.6" height="4" fill="#555"/>
  <circle cx="1463.7" cy="25.3" r="20.3" fill="#ececec"/>
  <circle cx="1463.7" cy="25.3" r="18.2" fill="#6c9c47"/>
  <circle cx="1463.7" cy="25.3" r="16.2" fill="#b5d2a1"/>
  <circle cx="1463.7" cy="25.3" r="15.2" fill="#a9c994"/>
 </svg>
 <div style="position:absolute;left:1443px;top:17px;width:41px;text-align:center;font-weight:bold;font-size:13px;color:#fff;line-height:17px;transform:scaleX(0.85)">JE</div>
</div>

<div id="left">
 <svg style="position:absolute;left:0;top:0" width="296" height="887" viewBox="0 50 296 887">
  <defs>
   <linearGradient id="tabsh" x1="0" y1="0" x2="0" y2="1"><stop offset="0" stop-color="#000" stop-opacity="0.35"/><stop offset="1" stop-color="#000" stop-opacity="0"/></linearGradient>
   <linearGradient id="topsh" x1="0" y1="0" x2="0" y2="1"><stop offset="0" stop-color="#000" stop-opacity="0.22"/><stop offset="1" stop-color="#000" stop-opacity="0"/></linearGradient>
   <linearGradient id="rsh" x1="0" y1="0" x2="1" y2="0"><stop offset="0" stop-color="#000" stop-opacity="0"/><stop offset="1" stop-color="#000" stop-opacity="0.12"/></linearGradient>
   <linearGradient id="hsh" x1="0" y1="0" x2="0" y2="1"><stop offset="0" stop-color="#000" stop-opacity="0.28"/><stop offset="1" stop-color="#000" stop-opacity="0"/></linearGradient>
   <linearGradient id="pw" x1="0" y1="0" x2="0" y2="1"><stop offset="0" stop-color="#f4f4f4"/><stop offset="1" stop-color="#cfcfcf"/></linearGradient>
  </defs>
  <rect x="0" y="50" width="42.5" height="887" fill="#2a2a2a"/>
  <!-- DEVICES tab -->
  <path d="M0 270 H42 V410 Q42 418 35 415.5 L9 399 Q1 394 0 384 Z" fill="#f2a000"/>
  <path d="M0 270 H42 V290 H0 Z" fill="url(#tabsh)" opacity="0.0"/>
  <!-- APERTURES tab -->
  <path d="M0 150 H42 V297 Q42 305 35 302.5 L9 288 Q1 284 0 274 Z" fill="#434851"/>
  <!-- ASSETS tab -->
  <path d="M0 50 H42 V184 Q42 193 35 190.5 L9 177 Q1 173 0 162 Z" fill="#434851"/>
  <path d="M0 162 Q1 173 9 177 L35 190.5 Q42 193 42 184" fill="none" stroke="#2f3339" stroke-width="1.2"/>
  <path d="M0 274 Q1 284 9 288 L35 302.5 Q42 305 42 297" fill="none" stroke="#2f3339" stroke-width="1.2"/>
  <path d="M0 384 Q1 394 9 399 L35 415.5 Q42 418 42 410" fill="none" stroke="#b87a00" stroke-width="1"/>
  <!-- panel -->
  <rect x="42" y="50" width="254" height="887" fill="#555655"/>
  <rect x="42" y="50" width="1" height="887" fill="#3a3a3a"/>
  <rect x="43.5" y="50" width="252.5" height="10" fill="url(#topsh)"/>
  <rect x="55" y="59" width="229" height="28" rx="1.5" fill="#ececee"/>
  <circle cx="71.5" cy="71" r="5.6" fill="none" stroke="#8f8f8f" stroke-width="1.8"/>
  <line x1="67.6" y1="75" x2="63.6" y2="79.6" stroke="#8f8f8f" stroke-width="2.2" stroke-linecap="round"/>
  <line x1="43.5" y1="97.5" x2="296" y2="97.5" stroke="#464646" stroke-width="1"/>
  <line x1="43.5" y1="98.7" x2="296" y2="98.7" stroke="#5f5f5f" stroke-width="1"/>
  <!-- content -->
  <rect x="46" y="128" width="250" height="697" fill="#e7e7e7"/>
  <rect x="46" y="128" width="1" height="697" fill="#d8d8d8"/>
  <rect x="276" y="128" width="20" height="697" fill="url(#rsh)"/>
  <rect x="46.5" y="128" width="249.5" height="9" fill="url(#hsh)"/>
  <path d="M54 110.5 L58 115 L62 110.5" fill="none" stroke="#e8e8e8" stroke-width="1.3"/>
  <g id="pwi"><path d="M276.5 112.5 L279.3 107.8 H285.1 L287.9 112.5 L285.1 117.2 H279.3 Z" fill="url(#pw)"/>
  <path d="M283.9 110.6 A2.6 2.6 0 1 1 280.4 110.6" fill="none" stroke="#777" stroke-width="1"/><line x1="282.2" y1="109" x2="282.2" y2="112.3" stroke="#777" stroke-width="1"/></g>
  <use href="#pwi" y="728"/>
  <use href="#pwi" y="759.5"/>
  <!-- bottom headers -->
  <line x1="43.5" y1="856" x2="296" y2="856" stroke="#444" stroke-width="1.2"/>
  <line x1="43.5" y1="857.3" x2="296" y2="857.3" stroke="#666" stroke-width="0.8"/>
  <line x1="43.5" y1="887.6" x2="296" y2="887.6" stroke="#444" stroke-width="1.2"/>
  <line x1="43.5" y1="888.9" x2="296" y2="888.9" stroke="#666" stroke-width="0.8"/>
  <path d="M55.6 837 L60.3 841.6 L55.6 846.2" fill="none" stroke="#e8e8e8" stroke-width="1.3"/>
  <path d="M55.6 868.5 L60.3 873.1 L55.6 877.7" fill="none" stroke="#e8e8e8" stroke-width="1.3"/>
 </svg>
 <div class="vt" style="left:21px;top:73px;color:#e4e4e4;transform:translate(-50%,-50%) rotate(-90deg) scaleX(0.85)">ASSETS</div>
 <div class="vt" style="left:21px;top:188px;color:#e4e4e4;transform:translate(-50%,-50%) rotate(-90deg) scaleX(0.9)">APERTURES</div>
 <div class="vt" style="left:21px;top:298.5px;color:#2e2e2e;transform:translate(-50%,-50%) rotate(-90deg) scaleX(0.95)">DEVICES</div>
 <div class="vt" style="left:22.5px;top:809.5px;color:#dedede;font-size:18px;transform:translate(-50%,-50%) rotate(-90deg) scaleX(0.905)">DIGITAL TWINS</div>
 <div style="position:absolute;left:86.5px;top:15.5px;font-size:13px;color:#a6a6a6;line-height:16px">Search</div>
 <div style="position:absolute;left:67.5px;top:55.5px;font-size:13.2px;font-weight:bold;color:#fff;line-height:16px">Sensor</div>
 <div style="position:absolute;left:67.5px;top:783.5px;font-size:13.7px;font-weight:bold;color:#fff;line-height:16px">Ventilation</div>
 <div style="position:absolute;left:67.5px;top:815px;font-size:13.5px;font-weight:bold;color:#fff;line-height:16px">Lighting</div>
</div>
<div id="icons" style="position:absolute;left:0;top:0;width:296px;height:937px"><svg style="position:absolute;left:0;top:0" width="296" height="937"><defs><filter id="ish" x="-50%" y="-50%" width="200%" height="200%"><feDropShadow dx="0" dy="1.2" stdDeviation="2.2" flood-color="#000" flood-opacity="0.18"/></filter></defs><g transform="translate(90.2,168.2)"><circle r="16.4" fill="#f2a000" filter="url(#ish)"/><circle r="13" fill="none" stroke="#fff" stroke-width="1.4"/><circle r="7.4" fill="#fff"/><circle cy="-9.3" r="1.1" fill="#fff"/></g><g transform="translate(172.4,168.2)"><circle r="16.4" fill="#f2a000" filter="url(#ish)"/><circle r="13" fill="none" stroke="#fff" stroke-width="1.4"/><circle cy="-9.3" r="1.1" fill="#fff"/></g><g transform="translate(254.3,168.2)"><circle r="16.4" fill="#f2a000" filter="url(#ish)"/><rect x="-2.6" y="-13" width="5.2" height="22.4" rx="2.6" fill="#fff"/><circle cx="0" cy="9.4" r="5.3" fill="#fff"/><g stroke="#f2a000" stroke-width="1"><line x1="0.6" y1="-9" x2="2.8" y2="-9"/><line x1="0.6" y1="-6" x2="2.8" y2="-6"/><line x1="0.6" y1="-3" x2="2.8" y2="-3"/></g></g><g transform="translate(90.2,251.5)"><circle r="16.4" fill="#f2a000" filter="url(#ish)"/><path d="M-14.5 0.8 H14.5 A14.5 13 0 0 1 -14.5 0.8 Z" fill="#fff"/><circle cy="4.6" r="6.6" fill="#f2a000"/><rect x="-1.9" y="-12.3" width="3.8" height="16.9" rx="1.9" fill="#fff"/><circle cx="0" cy="4.6" r="4.2" fill="#fff"/><g stroke="#f2a000" stroke-width="0.9"><line x1="0.4" y1="-9" x2="1.9" y2="-9"/><line x1="0.4" y1="-6.6" x2="1.9" y2="-6.6"/><line x1="0.4" y1="-4.2" x2="1.9" y2="-4.2"/></g></g><g transform="translate(172.4,251.5)"><circle r="16.4" fill="#f2a000" filter="url(#ish)"/><rect x="-6.6" y="-12.6" width="4.2" height="20.3" rx="2.1" fill="#fff"/><circle cx="-4.5" cy="7.7" r="4.6" fill="#fff"/><g stroke="#f2a000" stroke-width="0.9"><line x1="-4.1" y1="-9.5" x2="-2.4" y2="-9.5"/><line x1="-4.1" y1="-7" x2="-2.4" y2="-7"/><line x1="-4.1" y1="-4.5" x2="-2.4" y2="-4.5"/></g><path d="M5 -7.3 L9.3 -1.4 H0.7 Z M0.7 0.6 H9.3 L5 6.5 Z" fill="#fff"/></g><g transform="translate(254.3,251.5)"><circle r="16.4" fill="#f2a000" filter="url(#ish)"/><circle cx="-7.8" cy="-4.3" r="3.6" fill="#fff"/><path d="M-13.2 6.2 Q-13.2 -0.6 -7.8 -0.6 Q-2.3999999999999995 -0.6 -2.3999999999999995 6.2 Z" fill="#fff"/><circle cx="7.8" cy="-4.3" r="3.6" fill="#fff"/><path d="M2.3999999999999995 6.2 Q2.3999999999999995 -0.6 7.8 -0.6 Q13.2 -0.6 13.2 6.2 Z" fill="#fff"/><circle cx="0" cy="-0.6" r="5.3" fill="#f2a000"/><path d="M-8.5 9.5 Q-8.5 1.8 0 1.8 Q8.5 1.8 8.5 9.5 Z" fill="#f2a000"/><circle cx="0" cy="-0.6" r="4.1" fill="#fff"/><path d="M-7 8.2 Q-7 3.1 0 3.1 Q7 3.1 7 8.2 Z" fill="#fff"/></g><g transform="translate(90.2,336.5)"><circle r="16.4" fill="#f2a000" filter="url(#ish)"/><path d="M0 -11.5 C2.64 -5.5 6.6 0.8000000000000007 6.6 3.200000000000001 A6.6 6.6 0 0 1 -6.6 3.200000000000001 C-6.6 0.8000000000000007 -2.64 -5.5 0 -11.5 Z" fill="#fff"/><text x="0" y="6.3" text-anchor="middle" font-size="8.5" font-weight="bold" fill="#f2a000" font-family="Liberation Sans">%</text></g><g transform="translate(172.4,336.5)"><circle r="16.4" fill="#f2a000" filter="url(#ish)"/><path d="M-8.5 7.5 A5.5 5.5 0 0 1 -9.5 -3.2 A5 5 0 0 1 -3.6 -5.2 A6.5 6.5 0 0 1 8.6 -2.8 A5 5 0 0 1 8.8 7.5 Z" fill="#fff"/><text x="0.3" y="5" text-anchor="middle" font-size="8" font-weight="bold" fill="#f2a000" font-family="Liberation Sans" transform="scale(1.05,1)">CO</text></g><g transform="translate(254.3,336.5)"><circle r="16.4" fill="#f2a000" filter="url(#ish)"/><g fill="none" stroke="#fff" stroke-width="1.4" stroke-linecap="round"><path d="M-11 -4 H5 A3 3 0 1 0 2 -7"/><path d="M-10.8 -0.5 H10 A2.7 2.7 0 1 0 7.3 -3.2" /><path d="M-11 3 H6 A3 3 0 1 1 3 6"/><path d="M-7 6.5 H1"/></g></g><g transform="translate(90.2,421.3)"><circle r="16.4" fill="#f2a000" filter="url(#ish)"/><path d="M0 -12 C2.8800000000000003 -6 7.2 1.5999999999999996 7.2 3.3999999999999995 A7.2 7.2 0 0 1 -7.2 3.3999999999999995 C-7.2 1.5999999999999996 -2.8800000000000003 -6 0 -12 Z" fill="#fff"/><path d="M4.6 4.3 Q4.8 6.8 2.6 7.4" fill="none" stroke="#f2a000" stroke-width="0.9" stroke-linecap="round"/></g><g transform="translate(172.4,421.3)"><circle r="16.4" fill="#f2a000" filter="url(#ish)"/><path d="M-8.5 7.5 A5.5 5.5 0 0 1 -9.5 -3.2 A5 5 0 0 1 -3.6 -5.2 A6.5 6.5 0 0 1 8.6 -2.8 A5 5 0 0 1 8.8 7.5 Z" fill="#fff"/><text x="0.3" y="5" text-anchor="middle" font-size="8" font-weight="bold" fill="#f2a000" font-family="Liberation Sans" transform="scale(1.05,1)">CO</text></g></svg><div class="lab" style="left:50.2px;top:193.2px">Swarm</div><div class="lab" style="left:132.4px;top:193.2px">Swarm Mini</div><div class="lab" style="left:214.3px;top:193.2px">Temperature</div><div class="lab" style="left:50.2px;top:276.5px">Floor Temp.</div><div class="lab" style="left:132.4px;top:276.5px">Thermostat</div><div class="lab" style="left:214.3px;top:276.5px">Occupancy</div><div class="lab" style="left:50.2px;top:361.5px">Humidity</div><div class="lab" style="left:132.4px;top:361.5px">CO2</div><div class="lab" style="left:214.3px;top:361.5px">VOC</div><div class="lab" style="left:50.2px;top:446.3px">Rain</div><div class="lab" style="left:132.4px;top:446.3px">Water</div></div>
<div id="bottom"><svg style="position:absolute;left:0;top:0" width="1204" height="50" viewBox="296 887 1204 50"><defs><linearGradient id="bg1" x1="0" y1="0" x2="0" y2="1"><stop offset="0" stop-color="#5d5d5d"/><stop offset="1" stop-color="#525252"/></linearGradient><linearGradient id="arw" x1="0" y1="0" x2="0" y2="1"><stop offset="0" stop-color="#fafafa"/><stop offset="1" stop-color="#cfcfcf"/></linearGradient></defs><rect x="296" y="887" width="1204" height="50" fill="#555655"/><line x1="296" y1="887.6" x2="1500" y2="887.6" stroke="#4a4a4a" stroke-width="1.2"/><rect x="344.25" y="892.25" width="39.5" height="39.3" rx="4" fill="url(#bg1)" stroke="#3b3b3b" stroke-width="1.5"/><line x1="347.5" y1="893.7" x2="380.5" y2="893.7" stroke="#6a6a6a" stroke-width="0.8"/><rect x="389.75" y="892.25" width="39.5" height="39.3" rx="4" fill="url(#bg1)" stroke="#3b3b3b" stroke-width="1.5"/><line x1="393" y1="893.7" x2="426" y2="893.7" stroke="#6a6a6a" stroke-width="0.8"/><rect x="435.15" y="892.25" width="39.5" height="39.3" rx="4" fill="url(#bg1)" stroke="#3b3b3b" stroke-width="1.5"/><line x1="438.4" y1="893.7" x2="471.4" y2="893.7" stroke="#6a6a6a" stroke-width="0.8"/><rect x="480.45" y="892.25" width="39.5" height="39.3" rx="4" fill="url(#bg1)" stroke="#3b3b3b" stroke-width="1.5"/><line x1="483.7" y1="893.7" x2="516.7" y2="893.7" stroke="#6a6a6a" stroke-width="0.8"/><rect x="544.45" y="892.25" width="39.5" height="39.3" rx="4" fill="url(#bg1)" stroke="#3b3b3b" stroke-width="1.5"/><line x1="547.7" y1="893.7" x2="580.7" y2="893.7" stroke="#6a6a6a" stroke-width="0.8"/><rect x="589.75" y="892.25" width="39.5" height="39.3" rx="4" fill="url(#bg1)" stroke="#3b3b3b" stroke-width="1.5"/><line x1="593" y1="893.7" x2="626" y2="893.7" stroke="#6a6a6a" stroke-width="0.8"/><rect x="635.15" y="892.25" width="39.5" height="39.3" rx="4" fill="url(#bg1)" stroke="#3b3b3b" stroke-width="1.5"/><line x1="638.4" y1="893.7" x2="671.4" y2="893.7" stroke="#6a6a6a" stroke-width="0.8"/><rect x="680.35" y="892.25" width="39.5" height="39.3" rx="4" fill="url(#bg1)" stroke="#3b3b3b" stroke-width="1.5"/><line x1="683.6" y1="893.7" x2="716.6" y2="893.7" stroke="#6a6a6a" stroke-width="0.8"/><rect x="725.75" y="892.25" width="39.5" height="39.3" rx="4" fill="url(#bg1)" stroke="#3b3b3b" stroke-width="1.5"/><line x1="729" y1="893.7" x2="762" y2="893.7" stroke="#6a6a6a" stroke-width="0.8"/><rect x="771.15" y="892.25" width="39.5" height="39.3" rx="4" fill="url(#bg1)" stroke="#3b3b3b" stroke-width="1.5"/><line x1="774.4" y1="893.7" x2="807.4" y2="893.7" stroke="#6a6a6a" stroke-width="0.8"/><rect x="835.15" y="892.25" width="39.5" height="39.3" rx="4" fill="url(#bg1)" stroke="#3b3b3b" stroke-width="1.5"/><line x1="838.4" y1="893.7" x2="871.4" y2="893.7" stroke="#6a6a6a" stroke-width="0.8"/><rect x="880.25" y="892.25" width="39.5" height="39.3" rx="4" fill="url(#bg1)" stroke="#3b3b3b" stroke-width="1.5"/><line x1="883.5" y1="893.7" x2="916.5" y2="893.7" stroke="#6a6a6a" stroke-width="0.8"/><rect x="925.35" y="892.25" width="39.5" height="39.3" rx="4" fill="url(#bg1)" stroke="#3b3b3b" stroke-width="1.5"/><line x1="928.6" y1="893.7" x2="961.6" y2="893.7" stroke="#6a6a6a" stroke-width="0.8"/><rect x="970.95" y="892.25" width="39.5" height="39.3" rx="4" fill="url(#bg1)" stroke="#3b3b3b" stroke-width="1.5"/><line x1="974.2" y1="893.7" x2="1007.2" y2="893.7" stroke="#6a6a6a" stroke-width="0.8"/><rect x="1035.35" y="892.25" width="39.5" height="39.3" rx="4" fill="url(#bg1)" stroke="#3b3b3b" stroke-width="1.5"/><line x1="1038.6" y1="893.7" x2="1071.6" y2="893.7" stroke="#6a6a6a" stroke-width="0.8"/><rect x="1080.45" y="892.25" width="39.5" height="39.3" rx="4" fill="url(#bg1)" stroke="#3b3b3b" stroke-width="1.5"/><line x1="1083.7" y1="893.7" x2="1116.7" y2="893.7" stroke="#6a6a6a" stroke-width="0.8"/><rect x="1144.25" y="892.25" width="39.5" height="39.3" rx="4" fill="url(#bg1)" stroke="#3b3b3b" stroke-width="1.5"/><line x1="1147.5" y1="893.7" x2="1180.5" y2="893.7" stroke="#6a6a6a" stroke-width="0.8"/><path d="M466.9 896.0 H471.4 V900.5 Z" fill="#8d8d8d"/><path d="M621.5 896.0 H626 V900.5 Z" fill="#8d8d8d"/><path d="M666.9 896.0 H671.4 V900.5 Z" fill="#8d8d8d"/><path d="M712.1 896.0 H716.6 V900.5 Z" fill="#8d8d8d"/><path d="M757.5 896.0 H762 V900.5 Z" fill="#8d8d8d"/><path d="M866.9 896.0 H871.4 V900.5 Z" fill="#8d8d8d"/><g transform="translate(343.5,891.5)"><path d="M14.2 9.2 L15.5 25 L19.6 21.3 L23.4 31.7 L26.8 30.1 L22.6 20.2 L27.3 19.8 Z" fill="url(#arw)"/></g><g transform="translate(389,891.5)"><path d="M18.5 6.6 L15.8 9.3 H21.2 Z" fill="#8d8d8d"/><rect x="21.5" y="11" width="3" height="9" rx="1.5" fill="none" stroke="#e6e6e6" stroke-width="1.3"/><path d="M22.5 20 L20.3 23" stroke="#e6e6e6" stroke-width="1.3"/><rect x="11.5" y="21.5" width="3" height="8.5" rx="1.5" fill="#e6e6e6"/><path d="M17.5 23.5 L25 31.5" stroke="#e6e6e6" stroke-width="2.4" stroke-linecap="round"/><circle cx="16.5" cy="21.5" r="0.8" fill="#e6e6e6"/><circle cx="18.3" cy="20.3" r="0.6" fill="#e6e6e6"/></g><g transform="translate(434.4,891.5)"><g fill="none" stroke="#e6e6e6" stroke-width="1.1"><path d="M11 15 L20.5 10 L30 15 V26 L20.5 31 L11 26 Z"/><path d="M11 15 L20.5 20 L30 15 M20.5 20 V31"/><path d="M13.5 15 L20.5 11.5 L27.5 15 L20.5 18.5 Z"/><path d="M20.5 11.5 V15"/></g></g><g transform="translate(479.7,891.5)"><path d="M12 11.5 H28 L12 27.5 Z" fill="none" stroke="#e6e6e6" stroke-width="1.8"/><path d="M28 12 V28 H12" fill="none" stroke="#e6e6e6" stroke-width="0.9" stroke-dasharray="2 1.5"/><path d="M26 28 H31 M28.5 25.5 V30.5" stroke="#e6e6e6" stroke-width="1.2"/></g><g transform="translate(543.7,891.5)"><g fill="none" stroke="#9a9a9a" stroke-width="0.9"><path d="M10 20 L27 11 L29 12 V24 L12 33 L10 32 Z"/><path d="M12 21 L29 12 M12 21 V33"/><path d="M16.5 22.5 L23 19 V25 L16.5 28.5 Z"/><path d="M18 23 L21.5 21.2 V24.5 L18 26.3 Z"/></g></g><g transform="translate(589,891.5)"><g fill="none" stroke="#9a9a9a" stroke-width="0.9"><path d="M10 20 L27 11 L29 12 V24 L16 31 V25 L14 26 V33 L12 33 L10 32 Z"/><path d="M12 21 L29 12 M12 21 V33"/></g></g><g transform="translate(634.4,891.5)"><g fill="none" stroke="#e6e6e6" stroke-width="1.3"><path d="M9 22 L19.5 16 L31.5 21 L20.5 29 Z"/><path d="M19.5 16 L20.5 29"/><path d="M9 22 L9 23.3 L20.5 30.3 L31.5 22.3 V21"/></g></g><g transform="translate(679.6,891.5)"><g fill="none" stroke="#e6e6e6" stroke-width="1.3"><path d="M12 17 L27 10.5 L29 11.5 V24 L14 30.5 L12 29.5 Z"/><path d="M14 18 L29 11.5 M14 18 V30.5"/></g></g><g transform="translate(725,891.5)"><g fill="none" stroke="#e6e6e6" stroke-width="1.1"><path d="M15 10 L19 8 L22 10 L24 9 L29 14 L26 17 L22 15 L18 29 L13 31 L11 28 L16 18 L14 14 Z"/><path d="M14 14 L18 16 L22 15 M16 18 L20 20 M13 27 L17 21 M15 28 L19 21 M17 29 L21 21"/></g></g><g transform="translate(770.4,891.5)"><rect x="11" y="11" width="19" height="19" fill="none" stroke="#e6e6e6" stroke-width="1.1"/><rect x="14.5" y="14.5" width="12" height="12" fill="none" stroke="#e6e6e6" stroke-width="1.2" stroke-dasharray="1.8 1.2"/><g fill="#e6e6e6"><circle cx="11" cy="11" r="1.1"/><circle cx="30" cy="11" r="1.1"/><circle cx="11" cy="30" r="1.1"/><circle cx="30" cy="30" r="1.1"/></g></g><g transform="translate(834.4,891.5)"><rect x="21" y="12" width="9" height="17" fill="#9d9d9d" stroke="#e6e6e6" stroke-width="0.8"/><path d="M20 10 V31" stroke="#e6e6e6" stroke-width="1" stroke-dasharray="2 1.4"/><path d="M12 15 L20 24 M12.5 30 L19 17" stroke="#e6e6e6" stroke-width="1.5"/><circle cx="12" cy="29" r="2.4" fill="none" stroke="#e6e6e6" stroke-width="1.3"/></g><g transform="translate(879.5,891.5)"><rect x="11" y="20.5" width="19" height="8.5" fill="none" stroke="#e6e6e6" stroke-width="1.3"/><path d="M14 20.5 V23.5 M17 20.5 V22.5 M20 20.5 V23.5 M23 20.5 V22.5 M26 20.5 V23.5" stroke="#e6e6e6" stroke-width="0.9"/><path d="M12 16 H29 M11.5 12 V19 M29.5 12 V19" stroke="#e6e6e6" stroke-width="0.9"/><path d="M12 16 L14 14.8 V17.2 Z M29 16 L27 14.8 V17.2 Z" fill="#e6e6e6"/></g><g transform="translate(924.6,891.5)"><path d="M13.8 15.5 A8.5 8.5 0 1 1 13 24" fill="none" stroke="#e6e6e6" stroke-width="2.2"/><path d="M10.5 11.5 L17.5 13 L12.5 18.5 Z" fill="#e6e6e6"/><circle cx="21" cy="20.5" r="1.6" fill="#e6e6e6"/></g><g transform="translate(970.2,891.5)"><path d="M15 24 L12 20.5 Q11 19 12.5 18.5 Q13.5 18.3 14.5 19.5 L16 21 V11.5 Q16 10 17.2 10 Q18.4 10 18.4 11.5 V18 V10 Q18.4 8.5 19.7 8.5 Q21 8.5 21 10 V18 V10.5 Q21 9 22.3 9 Q23.6 9 23.6 10.5 V18.5 V12.5 Q23.6 11 24.8 11 Q26 11 26 12.5 V24 Q26 31 20.5 31 Q17.5 31 15 24 Z" fill="none" stroke="#e6e6e6" stroke-width="1.1"/></g><g transform="translate(1034.6,891.5)"><path d="M13 12 H28 L31 18 H10 Z" fill="#e6e6e6"/><path d="M11 24 L9 30 H32 L30 24" fill="none" stroke="#e6e6e6" stroke-width="1.4"/><path d="M20.5 13 L27 20 H23.5 V29 H17.5 V20 H14 Z" fill="#8f8f8f"/></g><g transform="translate(1079.7,891.5)"><path d="M13 12 H28 L31 18 H10" fill="none" stroke="#e6e6e6" stroke-width="1.4"/><path d="M11 24 L9 30 H32 L30 24 Z" fill="#e6e6e6"/><path d="M20.5 29 L27 22 H23.5 V13 H17.5 V22 H14 Z" fill="#8f8f8f"/></g><g transform="translate(1143.5,891.5)"><path d="M12.5 12.5 L28.5 28.5 M28.5 12.5 L12.5 28.5" stroke="#dcdcdc" stroke-width="4.2"/></g><circle cx="311.7" cy="899.6" r="2" fill="#6a6a6a"/><circle cx="311.7" cy="899" r="2" fill="#2e2e2e"/><circle cx="321" cy="899.6" r="2" fill="#6a6a6a"/><circle cx="321" cy="899" r="2" fill="#2e2e2e"/><circle cx="311.7" cy="908.0" r="2" fill="#6a6a6a"/><circle cx="311.7" cy="907.4" r="2" fill="#2e2e2e"/><circle cx="321" cy="908.0" r="2" fill="#6a6a6a"/><circle cx="321" cy="907.4" r="2" fill="#2e2e2e"/><circle cx="311.7" cy="916.6" r="2" fill="#6a6a6a"/><circle cx="311.7" cy="916" r="2" fill="#2e2e2e"/><circle cx="321" cy="916.6" r="2" fill="#6a6a6a"/><circle cx="321" cy="916" r="2" fill="#2e2e2e"/><circle cx="311.7" cy="925.1" r="2" fill="#6a6a6a"/><circle cx="311.7" cy="924.5" r="2" fill="#2e2e2e"/><circle cx="321" cy="925.1" r="2" fill="#6a6a6a"/><circle cx="321" cy="924.5" r="2" fill="#2e2e2e"/><circle cx="1473" cy="899.6" r="2" fill="#6a6a6a"/><circle cx="1473" cy="899" r="2" fill="#2e2e2e"/><circle cx="1481.6" cy="899.6" r="2" fill="#6a6a6a"/><circle cx="1481.6" cy="899" r="2" fill="#2e2e2e"/><circle cx="1473" cy="908.0" r="2" fill="#6a6a6a"/><circle cx="1473" cy="907.4" r="2" fill="#2e2e2e"/><circle cx="1481.6" cy="908.0" r="2" fill="#6a6a6a"/><circle cx="1481.6" cy="907.4" r="2" fill="#2e2e2e"/><circle cx="1473" cy="916.6" r="2" fill="#6a6a6a"/><circle cx="1473" cy="916" r="2" fill="#2e2e2e"/><circle cx="1481.6" cy="916.6" r="2" fill="#6a6a6a"/><circle cx="1481.6" cy="916" r="2" fill="#2e2e2e"/><circle cx="1473" cy="925.1" r="2" fill="#6a6a6a"/><circle cx="1473" cy="924.5" r="2" fill="#2e2e2e"/><circle cx="1481.6" cy="925.1" r="2" fill="#6a6a6a"/><circle cx="1481.6" cy="924.5" r="2" fill="#2e2e2e"/><circle cx="1305.4" cy="911.6" r="12.3" fill="none" stroke="#e6e6e6" stroke-width="2.6"/><path d="M1305.4 902 L1312 909.5 H1308.4 V919.5 H1302.4 V909.5 H1298.8 Z" fill="url(#arw)"/><rect x="1344" y="893" width="105" height="37" rx="8" fill="#464646"/><path d="M1352 929.6 H1441" stroke="#5e5e5e" stroke-width="0.8"/><circle cx="1358" cy="912.4" r="9" fill="#5a5a5a"/><rect x="1352.5" y="910.8" width="11" height="3.2" fill="#404040"/><circle cx="1436" cy="912.4" r="9" fill="#5a5a5a"/><rect x="1430.5" y="910.8" width="11" height="3.2" fill="#404040"/><rect x="1434.4" y="906.9" width="3.2" height="11" fill="#404040"/></svg><div style="position:absolute;left:1023px;top:17px;width:154px;text-align:center;font-weight:bold;font-size:15.5px;color:#f0f0f0;line-height:18px;transform:scaleX(0.92)">100%</div></div>
</body></html>
